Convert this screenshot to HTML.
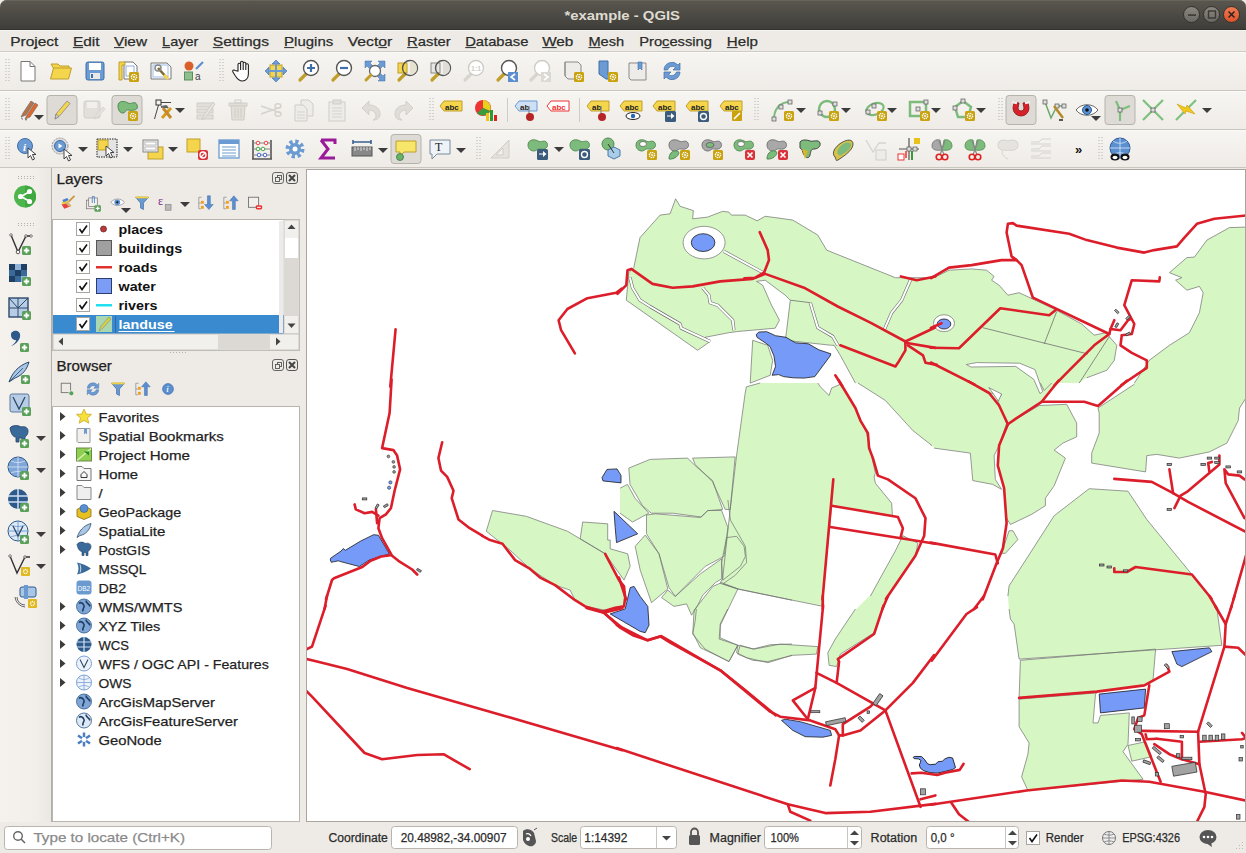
<!DOCTYPE html>
<html><head><meta charset="utf-8">
<style>
*{box-sizing:border-box;margin:0;padding:0}
html,body{width:1246px;height:853px;overflow:hidden;background:#eeebe7;font-family:"Liberation Sans",sans-serif;color:#3c3c3c}
.a{position:absolute}
#title{left:0;top:0;width:1246px;height:30px;background:linear-gradient(#5a574f,#4c4a44 50%,#3e3d38);border-radius:7px 7px 0 0;box-shadow:inset 0 1px #67645a,inset 0 -1px #33322e}
#title .t{left:0;width:1246px;top:6px;text-align:center;color:#dfdbd2;font-size:14.5px;font-weight:bold}
.wb{width:17px;height:17px;border-radius:50%;top:6px;background:linear-gradient(#8a8780,#6b6963);border:1px solid #34332f}
#menu{left:0;top:30px;width:1246px;height:22px;background:#eeebe6;border-top:1px solid #f6f4f0;border-bottom:1px solid #cfccc5}
#menu span{position:absolute;top:2px;font-size:14px;letter-spacing:0.6px;color:#2e2e2e}
.tb{left:0;width:1246px;background:linear-gradient(#f7f5f1,#efece8);border-top:1px solid #fbfaf8;border-bottom:1px solid #c9c6bf}
.tree{background:#fff;border:1px solid #b9b5ae}
.btxt{font-size:14px;letter-spacing:0.5px;color:#262626;line-height:19px;white-space:nowrap}
.ltxt{font-size:14px;letter-spacing:0.2px;font-weight:bold;color:#111;line-height:19px;white-space:nowrap}
.stxt{font-size:13.5px;color:#333;line-height:18px;white-space:nowrap}
.ptitle{font-size:14.5px;letter-spacing:0.4px;color:#1e1e1e}
</style></head><body>
<div id="title" class="a">
<div class="wb a" style="left:1183px"></div>
<div class="wb a" style="left:1203px"></div>
<div class="wb a" style="left:1223px;background:linear-gradient(#f07a50,#e0522a)"></div>
<svg class="a" style="left:1175px;top:0" width="71" height="30"><rect x="13" y="14.3" width="8" height="1.6" fill="#3a3935"/><rect x="33.5" y="11" width="7" height="7" fill="none" stroke="#3a3935" stroke-width="1.4"/><path d="M53.5 11.5l6 6M59.5 11.5l-6 6" stroke="#2a2320" stroke-width="1.5"/></svg>
</div>
<div id="menu" class="a"></div>
<div class="tb a" style="top:52px;height:39px"></div>
<div class="tb a" style="top:91px;height:39px"></div>
<div class="tb a" style="top:130px;height:38px"></div>
<svg class="a" style="left:0;top:0" width="1246" height="170"><rect x="5.5" y="59.0" width="1" height="1" fill="#b4b1ab"/><rect x="8.5" y="59.0" width="1" height="1" fill="#b4b1ab"/><rect x="5.5" y="62.0" width="1" height="1" fill="#b4b1ab"/><rect x="8.5" y="62.0" width="1" height="1" fill="#b4b1ab"/><rect x="5.5" y="65.0" width="1" height="1" fill="#b4b1ab"/><rect x="8.5" y="65.0" width="1" height="1" fill="#b4b1ab"/><rect x="5.5" y="68.0" width="1" height="1" fill="#b4b1ab"/><rect x="8.5" y="68.0" width="1" height="1" fill="#b4b1ab"/><rect x="5.5" y="71.0" width="1" height="1" fill="#b4b1ab"/><rect x="8.5" y="71.0" width="1" height="1" fill="#b4b1ab"/><rect x="5.5" y="74.0" width="1" height="1" fill="#b4b1ab"/><rect x="8.5" y="74.0" width="1" height="1" fill="#b4b1ab"/><rect x="5.5" y="77.0" width="1" height="1" fill="#b4b1ab"/><rect x="8.5" y="77.0" width="1" height="1" fill="#b4b1ab"/><rect x="5.5" y="80.0" width="1" height="1" fill="#b4b1ab"/><rect x="8.5" y="80.0" width="1" height="1" fill="#b4b1ab"/><g transform="translate(16,59)"><path d="M5 2.5h9l5 5v14.5h-14z" fill="#fff" stroke="#777"/><path d="M14 2.5v5h5" fill="none" stroke="#777"/></g><g transform="translate(49,59)"><path d="M2 5h7l2 2h9v3h-15z" fill="#f4d54c" stroke="#bf9e2a"/><path d="M1.5 20l3-11h18l-3 11z" fill="#f4d54c" stroke="#bf9e2a"/></g><g transform="translate(83,59)"><rect x="3" y="3" width="18" height="18" rx="2" fill="#6b9bd2" stroke="#3f6ea8"/><rect x="6" y="4" width="12" height="7" fill="#fff"/><rect x="7" y="14" width="10" height="6" fill="#e8e8e8"/><rect x="8" y="15" width="2" height="4" fill="#3f6ea8"/></g><g transform="translate(116,59)"><path d="M8 3h9l4 4v13h-13z" fill="#fff" stroke="#777"/><rect x="10" y="7" width="8" height="10" fill="none" stroke="#8fb0e0"/><path d="M3 3h6v3h-3v15h-3z" fill="#f4d54c" stroke="#bf9e2a"/><rect x="13" y="13" width="10" height="10" rx="1.5" fill="#c9a20e"/><circle cx="18" cy="18" r="2.6" fill="none" stroke="#fff" stroke-width="1.4" stroke-dasharray="1.3 0.7"/><circle cx="18" cy="18" r="0.9" fill="#fff"/></g><g transform="translate(149,59)"><path d="M2 4h16l4 4v12h-20z" fill="#fff" stroke="#777"/><rect x="4" y="6" width="15" height="12" fill="none" stroke="#9cbbe6"/><path d="M9 9l9 10" stroke="#7a6a3a" stroke-width="2.5"/><path d="M15 16l4 4" stroke="#f4d54c" stroke-width="3"/><circle cx="9" cy="9" r="3" fill="none" stroke="#888" stroke-width="1.5"/></g><g transform="translate(182,59)"><circle cx="7" cy="7" r="4.5" fill="#d9602b"/><path d="M14 10l7-7" stroke="#5b8fcf" stroke-width="2.2"/><rect x="2.5" y="13" width="8" height="8" fill="#8fbf8f" stroke="#5a8f5a"/><text x="13" y="21" font-size="10" font-family="Liberation Sans" fill="#444">a</text></g><rect x="219.5" y="59.0" width="1" height="1" fill="#b4b1ab"/><rect x="222.5" y="59.0" width="1" height="1" fill="#b4b1ab"/><rect x="219.5" y="62.0" width="1" height="1" fill="#b4b1ab"/><rect x="222.5" y="62.0" width="1" height="1" fill="#b4b1ab"/><rect x="219.5" y="65.0" width="1" height="1" fill="#b4b1ab"/><rect x="222.5" y="65.0" width="1" height="1" fill="#b4b1ab"/><rect x="219.5" y="68.0" width="1" height="1" fill="#b4b1ab"/><rect x="222.5" y="68.0" width="1" height="1" fill="#b4b1ab"/><rect x="219.5" y="71.0" width="1" height="1" fill="#b4b1ab"/><rect x="222.5" y="71.0" width="1" height="1" fill="#b4b1ab"/><rect x="219.5" y="74.0" width="1" height="1" fill="#b4b1ab"/><rect x="222.5" y="74.0" width="1" height="1" fill="#b4b1ab"/><rect x="219.5" y="77.0" width="1" height="1" fill="#b4b1ab"/><rect x="222.5" y="77.0" width="1" height="1" fill="#b4b1ab"/><rect x="219.5" y="80.0" width="1" height="1" fill="#b4b1ab"/><rect x="222.5" y="80.0" width="1" height="1" fill="#b4b1ab"/><g transform="translate(231,59)"><path d="M7 12V5.5a1.3 1.3 0 0 1 2.6 0V11V3.5a1.3 1.3 0 0 1 2.6 0V11V4.5a1.3 1.3 0 0 1 2.6 0V11V6a1.3 1.3 0 0 1 2.6 0v9c0 4-2.5 7-6 7s-5-2-7-5l-2.5-4a1.2 1.2 0 0 1 2-1.5z" fill="#fff" stroke="#222" stroke-width="1.1"/></g><g transform="translate(264,59)"><rect x="6" y="6" width="12" height="12" fill="#f4d54c" stroke="#bf9e2a"/><path d="M12 1l4 4h-8zM12 23l4-4h-8zM1 12l4-4v8zM23 12l-4-4v8z" fill="#6b9bd2" stroke="#3f6ea8" stroke-width="0.6"/><path d="M12 4v16M4 12h16" stroke="#6b9bd2" stroke-width="2"/></g><g transform="translate(297,59)"><path d="M3 21l6-6" stroke="#bf9e2a" stroke-width="3.2" stroke-linecap="round"/><circle cx="14" cy="9" r="7.5" fill="#fff" stroke="#555" stroke-width="1.4"/><path d="M14 5v8M10 9h8" stroke="#3f6ea8" stroke-width="2.2"/></g><g transform="translate(330,59)"><path d="M3 21l6-6" stroke="#bf9e2a" stroke-width="3.2" stroke-linecap="round"/><circle cx="14" cy="9" r="7.5" fill="#fff" stroke="#555" stroke-width="1.4"/><path d="M10 9h8" stroke="#3f6ea8" stroke-width="2.2"/></g><g transform="translate(363,59)"><path d="M2 2h7l-2 2 3 3-3 3-3-3-2 2zM22 2v7l-2-2-3 3-3-3 3-3-2-2zM22 22h-7l2-2-3-3 3-3 3 3 2-2z" fill="#6b9bd2" stroke="#3f6ea8" stroke-width="0.5"/><circle cx="12" cy="12" r="5.5" fill="#fff" stroke="#666" stroke-width="1.3"/><path d="M3 21l5-5" stroke="#bf9e2a" stroke-width="3" stroke-linecap="round"/></g><g transform="translate(396,59)"><rect x="2" y="4" width="9" height="10" fill="#f4d54c" stroke="#bf9e2a"/></g><g transform="translate(396,59)"><path d="M3 21l6-6" stroke="#bf9e2a" stroke-width="3.2" stroke-linecap="round"/><circle cx="14" cy="9" r="7.5" fill="none" stroke="#555" stroke-width="1.4"/><path d="M14 2a7 7 0 0 1 0 14z" fill="#e6e2d0"/></g><g transform="translate(429,59)"><rect x="2" y="4" width="9" height="10" fill="#e8e6e2" stroke="#888"/></g><g transform="translate(429,59)"><path d="M3 21l6-6" stroke="#bf9e2a" stroke-width="3.2" stroke-linecap="round"/><circle cx="14" cy="9" r="7.5" fill="none" stroke="#555" stroke-width="1.4"/><path d="M14 2a7 7 0 0 1 0 14z" fill="#e0ddd8"/></g><g transform="translate(462,59)"><path d="M3 21l6-6" stroke="#d8d5cf" stroke-width="3.2" stroke-linecap="round"/><circle cx="14" cy="9" r="7.5" fill="#fff" stroke="#cfccc6" stroke-width="1.4"/><text x="9" y="12" font-size="7" font-family="Liberation Sans" font-weight="bold" fill="#cfccc6">1:1</text></g><g transform="translate(495,59)"><path d="M3 21l6-6" stroke="#bf9e2a" stroke-width="3.2" stroke-linecap="round"/><circle cx="14" cy="9" r="7.5" fill="#fff" stroke="#555" stroke-width="1.4"/><rect x="13" y="13" width="10" height="10" fill="#5b8fcf"/><path d="M20 15l-4 3 4 3" stroke="#fff" stroke-width="1.6" fill="none"/></g><g transform="translate(528,59)"><path d="M3 21l6-6" stroke="#d8d5cf" stroke-width="3.2" stroke-linecap="round"/><circle cx="14" cy="9" r="7.5" fill="#fff" stroke="#cfccc6" stroke-width="1.4"/><rect x="13" y="13" width="10" height="10" fill="#dcd9d3"/><path d="M16 15l4 3-4 3" stroke="#fff" stroke-width="1.6" fill="none"/></g><g transform="translate(561,59)"><path d="M4 3h13l3 3v14h-13l-3-3z" fill="#eeece8" stroke="#8a8a8a"/><path d="M4 3v14" stroke="#8a8a8a"/><rect x="13" y="13" width="10" height="10" rx="1.5" fill="#c9a20e"/><circle cx="18" cy="18" r="2.6" fill="none" stroke="#fff" stroke-width="1.4" stroke-dasharray="1.3 0.7"/><circle cx="18" cy="18" r="0.9" fill="#fff"/></g><g transform="translate(595,59)"><path d="M4 2h9v14l4 4h-6l-7-5z" fill="#6b9bd2" stroke="#3f6ea8"/><rect x="13" y="13" width="10" height="10" rx="1.5" fill="#c9a20e"/><circle cx="18" cy="18" r="2.6" fill="none" stroke="#fff" stroke-width="1.4" stroke-dasharray="1.3 0.7"/><circle cx="18" cy="18" r="0.9" fill="#fff"/></g><g transform="translate(626,59)"><path d="M3 4h17v17h-15l-2-2z" fill="#eeece8" stroke="#8a8a8a"/><path d="M12 3h4v8l-2-2-2 2z" fill="#6b9bd2" stroke="#3f6ea8" stroke-width="0.6"/></g><g transform="translate(660,59)"><path d="M4 11a8 8 0 0 1 14-5l2-2v7h-7l2.5-2.5a5 5 0 0 0-8 2.5z" fill="#6b9bd2" stroke="#3f6ea8" stroke-width="0.7"/><path d="M20 13a8 8 0 0 1-14 5l-2 2v-7h7l-2.5 2.5a5 5 0 0 0 8-2.5z" fill="#6b9bd2" stroke="#3f6ea8" stroke-width="0.7"/></g><rect x="5.5" y="98.0" width="1" height="1" fill="#b4b1ab"/><rect x="8.5" y="98.0" width="1" height="1" fill="#b4b1ab"/><rect x="5.5" y="101.0" width="1" height="1" fill="#b4b1ab"/><rect x="8.5" y="101.0" width="1" height="1" fill="#b4b1ab"/><rect x="5.5" y="104.0" width="1" height="1" fill="#b4b1ab"/><rect x="8.5" y="104.0" width="1" height="1" fill="#b4b1ab"/><rect x="5.5" y="107.0" width="1" height="1" fill="#b4b1ab"/><rect x="8.5" y="107.0" width="1" height="1" fill="#b4b1ab"/><rect x="5.5" y="110.0" width="1" height="1" fill="#b4b1ab"/><rect x="8.5" y="110.0" width="1" height="1" fill="#b4b1ab"/><rect x="5.5" y="113.0" width="1" height="1" fill="#b4b1ab"/><rect x="8.5" y="113.0" width="1" height="1" fill="#b4b1ab"/><rect x="5.5" y="116.0" width="1" height="1" fill="#b4b1ab"/><rect x="8.5" y="116.0" width="1" height="1" fill="#b4b1ab"/><rect x="5.5" y="119.0" width="1" height="1" fill="#b4b1ab"/><rect x="8.5" y="119.0" width="1" height="1" fill="#b4b1ab"/><rect x="47.0" y="95.5" width="30" height="29" rx="3" fill="#dedbd6" stroke="#b6b3ad"/><rect x="112.0" y="95.5" width="30" height="29" rx="3" fill="#dedbd6" stroke="#b6b3ad"/><rect x="1006.0" y="95.5" width="30" height="29" rx="3" fill="#dedbd6" stroke="#b6b3ad"/><rect x="1105.0" y="95.5" width="30" height="29" rx="3" fill="#dedbd6" stroke="#b6b3ad"/><g transform="translate(18,98)"><path d="M3 19l2-4 8-12 3 2-8 12z" fill="#b5734a" stroke="#666" stroke-width="0.6"/><path d="M7 21l2-4 8-12 3 2-8 12z" fill="#e2662a" stroke="#666" stroke-width="0.6"/><path d="M3 19l1 3 1-1zM7 21l1 2 1-2" fill="#666"/></g><path d="M34 115h10l-5 5z" fill="#3c3c3c"/><g transform="translate(50,98)"><path d="M5 21l1-5 11-13 3 2.5-11 13z" fill="#f4d54c" stroke="#888" stroke-width="0.8"/><path d="M5 21l1-5 3 2.5z" fill="#ccc" stroke="#777" stroke-width="0.6"/></g><g transform="translate(82,98)"><rect x="2" y="3" width="16" height="17" rx="2" fill="#e2dfda" stroke="#d0cdc7"/><rect x="5" y="4" width="10" height="6" fill="#f2f0ec"/><path d="M12 21l2-4 7-8 2 2-7 8z" fill="#e6e3de" stroke="#d0cdc7" stroke-width="0.7"/></g><g transform="translate(115,98)"><path d="M3 8c0-6 7-5 10-3s7-3 9 2-4 6-8 5-3 3-6 3-5-3-5-7z" fill="#7dbb7d" stroke="#4f8a4f"/><rect x="13" y="13" width="10" height="10" rx="1.5" fill="#c9a20e"/><circle cx="18" cy="18" r="2.6" fill="none" stroke="#fff" stroke-width="1.4" stroke-dasharray="1.3 0.7"/><circle cx="18" cy="18" r="0.9" fill="#fff"/></g><g transform="translate(151,98)"><rect x="5" y="2" width="5" height="5" fill="none" stroke="#333"/><path d="M7.5 7l-4 14M10 4.5h10" stroke="#333" stroke-width="0.9"/><path d="M11 20l9-10" stroke="#d49b1f" stroke-width="3"/><path d="M12 10l8 10" stroke="#c48a2a" stroke-width="3"/><path d="M10 9l5-1 2 2" stroke="#666" stroke-width="2"/></g><path d="M175 108h10l-5 5z" fill="#3c3c3c"/><g transform="translate(194,98)"><rect x="3" y="5" width="16" height="4" fill="#e2dfda" stroke="#d0cdc7"/><rect x="3" y="11" width="16" height="4" fill="#e2dfda" stroke="#d0cdc7"/><rect x="3" y="17" width="16" height="4" fill="#e2dfda" stroke="#d0cdc7"/><path d="M8 22l2-5 9-13 2 2-9 13z" fill="#e8e5e0" stroke="#d0cdc7"/></g><g transform="translate(226,98)"><rect x="3" y="5" width="18" height="3" fill="#e2dfda" stroke="#d0cdc7"/><path d="M5 8h14l-1 14h-12z" fill="#e2dfda" stroke="#d0cdc7"/><path d="M9 10v10M12 10v10M15 10v10" stroke="#d0cdc7"/><rect x="9" y="2" width="6" height="3" fill="none" stroke="#d0cdc7"/></g><g transform="translate(259,98)"><path d="M2 8l20 7M2 16l20-7" stroke="#d6d3cd" stroke-width="1.6"/><ellipse cx="19" cy="8" rx="3" ry="2.3" fill="none" stroke="#d6d3cd" stroke-width="1.5"/><ellipse cx="19" cy="16" rx="3" ry="2.3" fill="none" stroke="#d6d3cd" stroke-width="1.5"/></g><g transform="translate(292,98)"><path d="M9 2h8l4 4v12h-12z" fill="#eeece8" stroke="#d0cdc7"/><path d="M3 7h8l4 4v12h-12z" fill="#eeece8" stroke="#d0cdc7"/><path d="M5 14h8M5 17h8M5 20h8" stroke="#d6d3cd"/></g><g transform="translate(325,98)"><rect x="4" y="4" width="16" height="19" fill="#eeece8" stroke="#d0cdc7"/><rect x="8" y="2" width="8" height="4" fill="#e2dfda" stroke="#d0cdc7"/><path d="M7 10h10M7 13h10M7 16h10M7 19h10" stroke="#d6d3cd"/></g><g transform="translate(359,98)"><g><path d="M3 10l7-7v4c7 0 11 4 11 9s-4 6-7 6c3-2 4-4 2-7s-6-3-6-3v5z" fill="#e0ddd8" stroke="#d2cfc9"/></g></g><g transform="translate(392,98)"><g transform="translate(24,0) scale(-1,1)"><path d="M3 10l7-7v4c7 0 11 4 11 9s-4 6-7 6c3-2 4-4 2-7s-6-3-6-3v5z" fill="#e0ddd8" stroke="#d2cfc9"/></g></g><rect x="429.5" y="98.0" width="1" height="1" fill="#b4b1ab"/><rect x="432.5" y="98.0" width="1" height="1" fill="#b4b1ab"/><rect x="429.5" y="101.0" width="1" height="1" fill="#b4b1ab"/><rect x="432.5" y="101.0" width="1" height="1" fill="#b4b1ab"/><rect x="429.5" y="104.0" width="1" height="1" fill="#b4b1ab"/><rect x="432.5" y="104.0" width="1" height="1" fill="#b4b1ab"/><rect x="429.5" y="107.0" width="1" height="1" fill="#b4b1ab"/><rect x="432.5" y="107.0" width="1" height="1" fill="#b4b1ab"/><rect x="429.5" y="110.0" width="1" height="1" fill="#b4b1ab"/><rect x="432.5" y="110.0" width="1" height="1" fill="#b4b1ab"/><rect x="429.5" y="113.0" width="1" height="1" fill="#b4b1ab"/><rect x="432.5" y="113.0" width="1" height="1" fill="#b4b1ab"/><rect x="429.5" y="116.0" width="1" height="1" fill="#b4b1ab"/><rect x="432.5" y="116.0" width="1" height="1" fill="#b4b1ab"/><rect x="429.5" y="119.0" width="1" height="1" fill="#b4b1ab"/><rect x="432.5" y="119.0" width="1" height="1" fill="#b4b1ab"/><g transform="translate(439,98)"><path d="M1 8l4-5h18v10h-18z" fill="#f4d54c" stroke="#bf9e2a"/><text x="6" y="11.5" font-size="8" font-weight="bold" font-family="Liberation Sans" fill="#222">abc</text></g><g transform="translate(473,98)"><circle cx="10" cy="10" r="8" fill="#e33"/><path d="M10 10V2a8 8 0 0 1 7 11z" fill="#e6d21d"/><path d="M10 10l7 3a8 8 0 0 1-13 2z" fill="#3b9b3b"/><rect x="13" y="15" width="3" height="8" fill="#f0c419"/><rect x="17" y="12" width="3" height="11" fill="#2f9a2f"/><rect x="21" y="17" width="3" height="6" fill="#d22"/></g><rect x="507" y="98" width="1" height="24" fill="#cfccc6"/><g transform="translate(514,98)"><path d="M1 8l4-5h18v10h-18z" fill="#cfe0f5" stroke="#6b9bd2"/><text x="6" y="11.5" font-size="8" font-weight="bold" font-family="Liberation Sans" fill="#222">ab</text></g><g transform="translate(514,98)"><path d="M15 8v8" stroke="#888" stroke-width="1.2"/><circle cx="16" cy="19" r="4" fill="#b52525"/></g><g transform="translate(546,98)"><path d="M1 8l4-5h18v10h-18z" fill="#fff" stroke="#e33"/><text x="6" y="11.5" font-size="8" font-weight="bold" font-family="Liberation Sans" fill="#e33">abc</text></g><rect x="579" y="98" width="1" height="24" fill="#cfccc6"/><g transform="translate(586,98)"><path d="M1 8l4-5h18v10h-18z" fill="#f4d54c" stroke="#bf9e2a"/><text x="6" y="11.5" font-size="8" font-weight="bold" font-family="Liberation Sans" fill="#222">ab</text></g><g transform="translate(586,98)"><path d="M15 8v8" stroke="#888" stroke-width="1.2"/><circle cx="16" cy="19" r="4" fill="#b52525"/></g><g transform="translate(619,98)"><path d="M1 8l4-5h18v10h-18z" fill="#f4d54c" stroke="#bf9e2a"/><text x="6" y="11.5" font-size="8" font-weight="bold" font-family="Liberation Sans" fill="#222">abc</text></g><g transform="translate(619,98)"><ellipse cx="14" cy="18" rx="7" ry="3.5" fill="#fff" stroke="#222"/><circle cx="14" cy="18" r="2.2" fill="#2a66b0"/></g><g transform="translate(652,98)"><path d="M1 8l4-5h18v10h-18z" fill="#f4d54c" stroke="#bf9e2a"/><text x="6" y="11.5" font-size="8" font-weight="bold" font-family="Liberation Sans" fill="#222">abc</text></g><g transform="translate(652,98)"><rect x="13" y="13" width="11" height="11" rx="1.5" fill="#3b5b7c"/><path d="M15 17.5h4v-2.5l3.5 3-3.5 3v-2.5h-4z" fill="#fff"/></g><g transform="translate(685,98)"><path d="M1 8l4-5h18v10h-18z" fill="#f4d54c" stroke="#bf9e2a"/><text x="6" y="11.5" font-size="8" font-weight="bold" font-family="Liberation Sans" fill="#222">abc</text></g><g transform="translate(685,98)"><rect x="13" y="13" width="11" height="11" rx="1.5" fill="#3b5b7c"/><circle cx="18.5" cy="18.5" r="3" fill="none" stroke="#fff" stroke-width="1.4"/></g><g transform="translate(719,98)"><path d="M1 8l4-5h18v10h-18z" fill="#f4d54c" stroke="#bf9e2a"/><text x="6" y="11.5" font-size="8" font-weight="bold" font-family="Liberation Sans" fill="#222">abc</text></g><g transform="translate(719,98)"><rect x="13" y="13" width="10" height="10" rx="1" fill="#c9a20e"/><path d="M15 21l6-6" stroke="#fff" stroke-width="1.6"/></g><rect x="754.5" y="98.0" width="1" height="1" fill="#b4b1ab"/><rect x="757.5" y="98.0" width="1" height="1" fill="#b4b1ab"/><rect x="754.5" y="101.0" width="1" height="1" fill="#b4b1ab"/><rect x="757.5" y="101.0" width="1" height="1" fill="#b4b1ab"/><rect x="754.5" y="104.0" width="1" height="1" fill="#b4b1ab"/><rect x="757.5" y="104.0" width="1" height="1" fill="#b4b1ab"/><rect x="754.5" y="107.0" width="1" height="1" fill="#b4b1ab"/><rect x="757.5" y="107.0" width="1" height="1" fill="#b4b1ab"/><rect x="754.5" y="110.0" width="1" height="1" fill="#b4b1ab"/><rect x="757.5" y="110.0" width="1" height="1" fill="#b4b1ab"/><rect x="754.5" y="113.0" width="1" height="1" fill="#b4b1ab"/><rect x="757.5" y="113.0" width="1" height="1" fill="#b4b1ab"/><rect x="754.5" y="116.0" width="1" height="1" fill="#b4b1ab"/><rect x="757.5" y="116.0" width="1" height="1" fill="#b4b1ab"/><rect x="754.5" y="119.0" width="1" height="1" fill="#b4b1ab"/><rect x="757.5" y="119.0" width="1" height="1" fill="#b4b1ab"/><g transform="translate(771,98)"><path d="M3 21c0-10 6-17 16-17" fill="none" stroke="#7dbb7d" stroke-width="2"/><rect x="1" y="19" width="4" height="4" fill="#ddd" stroke="#555" stroke-width="0.7"/><rect x="8" y="7" width="4" height="4" fill="#ddd" stroke="#555" stroke-width="0.7"/><rect x="17" y="2" width="4" height="4" fill="#ddd" stroke="#555" stroke-width="0.7"/><rect x="13" y="13" width="10" height="10" rx="1.5" fill="#c9a20e"/><circle cx="18" cy="18" r="2.6" fill="none" stroke="#fff" stroke-width="1.4" stroke-dasharray="1.3 0.7"/><circle cx="18" cy="18" r="0.9" fill="#fff"/></g><path d="M796 108h10l-5 5z" fill="#3c3c3c"/><g transform="translate(816,98)"><circle cx="11" cy="11" r="8" fill="none" stroke="#7dbb7d" stroke-width="2.5"/><rect x="17" y="4" width="4" height="4" fill="#ddd" stroke="#555" stroke-width="0.7"/><rect x="2" y="13" width="4" height="4" fill="#ddd" stroke="#555" stroke-width="0.7"/><rect x="13" y="13" width="10" height="10" rx="1.5" fill="#c9a20e"/><circle cx="18" cy="18" r="2.6" fill="none" stroke="#fff" stroke-width="1.4" stroke-dasharray="1.3 0.7"/><circle cx="18" cy="18" r="0.9" fill="#fff"/></g><path d="M841 108h10l-5 5z" fill="#3c3c3c"/><g transform="translate(864,98)"><ellipse cx="11" cy="11" rx="9" ry="5.5" fill="none" stroke="#7dbb7d" stroke-width="2.2" transform="rotate(-20 11 11)"/><rect x="2" y="12" width="4" height="4" fill="#ddd" stroke="#555" stroke-width="0.7"/><rect x="8" y="6" width="4" height="4" fill="#ddd" stroke="#555" stroke-width="0.7"/><rect x="13" y="13" width="10" height="10" rx="1.5" fill="#c9a20e"/><circle cx="18" cy="18" r="2.6" fill="none" stroke="#fff" stroke-width="1.4" stroke-dasharray="1.3 0.7"/><circle cx="18" cy="18" r="0.9" fill="#fff"/></g><path d="M887 108h10l-5 5z" fill="#3c3c3c"/><g transform="translate(907,98)"><rect x="3" y="4" width="16" height="14" fill="none" stroke="#7dbb7d" stroke-width="2.5"/><rect x="9" y="9" width="4" height="4" fill="#ddd" stroke="#555" stroke-width="0.7"/><rect x="17" y="2" width="4" height="4" fill="#ddd" stroke="#555" stroke-width="0.7"/><rect x="13" y="13" width="10" height="10" rx="1.5" fill="#c9a20e"/><circle cx="18" cy="18" r="2.6" fill="none" stroke="#fff" stroke-width="1.4" stroke-dasharray="1.3 0.7"/><circle cx="18" cy="18" r="0.9" fill="#fff"/></g><path d="M931 108h10l-5 5z" fill="#3c3c3c"/><g transform="translate(952,98)"><path d="M11 3l8 6-3 10h-10l-3-10z" fill="none" stroke="#7dbb7d" stroke-width="2.5"/><rect x="9" y="1" width="4" height="4" fill="#ddd" stroke="#555" stroke-width="0.7"/><rect x="1" y="8" width="4" height="4" fill="#ddd" stroke="#555" stroke-width="0.7"/><rect x="13" y="13" width="10" height="10" rx="1.5" fill="#c9a20e"/><circle cx="18" cy="18" r="2.6" fill="none" stroke="#fff" stroke-width="1.4" stroke-dasharray="1.3 0.7"/><circle cx="18" cy="18" r="0.9" fill="#fff"/></g><path d="M976 108h10l-5 5z" fill="#3c3c3c"/><rect x="998.5" y="98.0" width="1" height="1" fill="#b4b1ab"/><rect x="1001.5" y="98.0" width="1" height="1" fill="#b4b1ab"/><rect x="998.5" y="101.0" width="1" height="1" fill="#b4b1ab"/><rect x="1001.5" y="101.0" width="1" height="1" fill="#b4b1ab"/><rect x="998.5" y="104.0" width="1" height="1" fill="#b4b1ab"/><rect x="1001.5" y="104.0" width="1" height="1" fill="#b4b1ab"/><rect x="998.5" y="107.0" width="1" height="1" fill="#b4b1ab"/><rect x="1001.5" y="107.0" width="1" height="1" fill="#b4b1ab"/><rect x="998.5" y="110.0" width="1" height="1" fill="#b4b1ab"/><rect x="1001.5" y="110.0" width="1" height="1" fill="#b4b1ab"/><rect x="998.5" y="113.0" width="1" height="1" fill="#b4b1ab"/><rect x="1001.5" y="113.0" width="1" height="1" fill="#b4b1ab"/><rect x="998.5" y="116.0" width="1" height="1" fill="#b4b1ab"/><rect x="1001.5" y="116.0" width="1" height="1" fill="#b4b1ab"/><rect x="998.5" y="119.0" width="1" height="1" fill="#b4b1ab"/><rect x="1001.5" y="119.0" width="1" height="1" fill="#b4b1ab"/><g transform="translate(1009,98)"><path d="M4 10a8 8 0 0 0 16 0l-1-6-5 1 1 5a3 3 0 0 1-6 0l1-5-5-1z" fill="#d8202a" stroke="#8a1515" stroke-width="0.8"/><path d="M3 4l5 1M16 5l5-1" stroke="#eee" stroke-width="2.5"/></g><g transform="translate(1042,98)"><path d="M3 4l6 16 6-12h7" fill="none" stroke="#6aa86a" stroke-width="1.5"/><rect x="1" y="2" width="4" height="4" fill="#ddd" stroke="#555" stroke-width="0.7"/><rect x="13" y="6" width="4" height="4" fill="#ddd" stroke="#555" stroke-width="0.7"/><rect x="20" y="6" width="4" height="4" fill="#ddd" stroke="#555" stroke-width="0.7"/><path d="M12 8l9 12" stroke="#b68a2a" stroke-width="2.5"/><path d="M17 22l4 0" stroke="#222" stroke-width="1.5"/></g><g transform="translate(1075,98)"><path d="M1 12c5-7 17-7 22 0-5 7-17 7-22 0z" fill="#fff" stroke="#666"/><circle cx="12" cy="12" r="4.5" fill="#5a8fd0" stroke="#2a5a9a"/><circle cx="12" cy="12" r="1.8" fill="#111"/></g><path d="M1091 116h10l-5 5z" fill="#3c3c3c"/><g transform="translate(1108,98)"><path d="M12 12l-4-9M12 12l10-4M12 12v11" stroke="#7cc07c" stroke-width="2.2"/><rect x="10" y="10" width="4" height="4" fill="#ddd" stroke="#555" stroke-width="0.7"/></g><g transform="translate(1141,98)"><path d="M2 2l20 20M22 2l-20 20" stroke="#7cc07c" stroke-width="2.2"/><rect x="10" y="10" width="4" height="4" fill="#ddd" stroke="#555" stroke-width="0.7"/></g><g transform="translate(1174,98)"><path d="M2 22l20-20" stroke="#7cc07c" stroke-width="2.2"/><path d="M3 6l9 4 1-3 8 9-9-3-1 3z" fill="#f2c81a" stroke="#c79a10" stroke-width="0.6"/></g><path d="M1202 108h10l-5 5z" fill="#3c3c3c"/><rect x="5.5" y="137.0" width="1" height="1" fill="#b4b1ab"/><rect x="8.5" y="137.0" width="1" height="1" fill="#b4b1ab"/><rect x="5.5" y="140.0" width="1" height="1" fill="#b4b1ab"/><rect x="8.5" y="140.0" width="1" height="1" fill="#b4b1ab"/><rect x="5.5" y="143.0" width="1" height="1" fill="#b4b1ab"/><rect x="8.5" y="143.0" width="1" height="1" fill="#b4b1ab"/><rect x="5.5" y="146.0" width="1" height="1" fill="#b4b1ab"/><rect x="8.5" y="146.0" width="1" height="1" fill="#b4b1ab"/><rect x="5.5" y="149.0" width="1" height="1" fill="#b4b1ab"/><rect x="8.5" y="149.0" width="1" height="1" fill="#b4b1ab"/><rect x="5.5" y="152.0" width="1" height="1" fill="#b4b1ab"/><rect x="8.5" y="152.0" width="1" height="1" fill="#b4b1ab"/><rect x="5.5" y="155.0" width="1" height="1" fill="#b4b1ab"/><rect x="8.5" y="155.0" width="1" height="1" fill="#b4b1ab"/><rect x="5.5" y="158.0" width="1" height="1" fill="#b4b1ab"/><rect x="8.5" y="158.0" width="1" height="1" fill="#b4b1ab"/><rect x="391.0" y="134.5" width="30" height="29" rx="3" fill="#dedbd6" stroke="#b6b3ad"/><g transform="translate(16,137)"><circle cx="9" cy="9" r="7.5" fill="#6b9bd2" stroke="#3f6ea8"/><text x="7" y="14" font-size="11" font-weight="bold" font-style="italic" font-family="Liberation Serif" fill="#fff">i</text><path d="M12 11l0 10 2.5-2.5 2 4.5 2-1-2-4.5h3.5z" fill="#fff" stroke="#333" stroke-width="0.9"/></g><g transform="translate(51,137)"><circle cx="9" cy="9" r="8" fill="#ddd" stroke="#999" stroke-dasharray="2 1"/><circle cx="9" cy="9" r="5.5" fill="#6b9bd2" stroke="#3f6ea8"/><path d="M7.5 6.5l4 2.5-4 2.5z" fill="#fff"/><path d="M13 12l0 10 2.5-2.5 2 4.5 2-1-2-4.5h3.5z" fill="#fff" stroke="#333" stroke-width="0.9"/></g><path d="M78 147h10l-5 5z" fill="#3c3c3c"/><g transform="translate(95,137)"><rect x="2" y="2" width="20" height="18" fill="#e4e4e4" stroke="#222" stroke-dasharray="1.5 1"/><rect x="3" y="3" width="10" height="10" fill="#f4d54c" stroke="#bf9e2a"/><path d="M11 9l0 10 2.5-2.5 2 4.5 2-1-2-4.5h3.5z" fill="#fff" stroke="#333" stroke-width="0.9"/></g><path d="M123 147h10l-5 5z" fill="#3c3c3c"/><g transform="translate(141,137)"><rect x="7" y="10" width="15" height="12" fill="#f4d54c" stroke="#bf9e2a"/><rect x="2" y="3" width="15" height="12" fill="#eee" stroke="#888"/><rect x="4" y="5" width="11" height="3" fill="#fff" stroke="#999" stroke-width="0.6"/><rect x="4" y="10" width="11" height="3" fill="#fff" stroke="#999" stroke-width="0.6"/></g><path d="M168 147h10l-5 5z" fill="#3c3c3c"/><g transform="translate(185,137)"><rect x="2" y="2" width="13" height="13" fill="#f4d54c" stroke="#bf9e2a"/><rect x="13" y="13" width="10" height="10" rx="2" fill="#d8323a"/><circle cx="18" cy="18" r="3" fill="none" stroke="#fff" stroke-width="1.3"/><path d="M16 20l4-4" stroke="#fff" stroke-width="1.3"/></g><g transform="translate(217,137)"><rect x="2" y="3" width="20" height="18" fill="#fff" stroke="#6b9bd2" stroke-width="1.3"/><rect x="2" y="3" width="20" height="4" fill="#6b9bd2"/><path d="M5 10h14M5 13h14M5 16h14M5 19h14" stroke="#6b9bd2" stroke-width="1"/></g><g transform="translate(250,137)"><path d="M3 3v19M21 3v19M2 22h20" stroke="#555" stroke-width="1.6"/><path d="M3 6h18M3 12h18M3 18h18" stroke="#888"/><circle cx="8" cy="6" r="1.8" fill="#fff" stroke="#e44"/><circle cx="16" cy="6" r="1.8" fill="#fff" stroke="#e44"/><circle cx="8" cy="12" r="1.8" fill="#fff" stroke="#4a4"/><circle cx="13" cy="12" r="1.8" fill="#fff" stroke="#4a4"/><circle cx="9" cy="18" r="1.8" fill="#fff" stroke="#46c"/><circle cx="15" cy="18" r="1.8" fill="#fff" stroke="#46c"/></g><g transform="translate(283,137)"><circle cx="12" cy="12" r="7" fill="none" stroke="#6b9bd2" stroke-width="5" stroke-dasharray="3 2.5"/><circle cx="12" cy="12" r="6" fill="#6b9bd2"/><circle cx="12" cy="12" r="2.5" fill="#fff"/></g><g transform="translate(316,137)"><path d="M5 3h14v4M19 21h-14l7-9-7-9" fill="none" stroke="#9a1a9a" stroke-width="3"/></g><g transform="translate(350,137)"><path d="M3 5h18M3 3v4M21 3v4" stroke="#3a6090" stroke-width="1.6"/><rect x="2" y="10" width="20" height="9" fill="#888" stroke="#555"/><path d="M5 10v4M8 10v3M11 10v4M14 10v3M17 10v4M20 10v3" stroke="#ddd"/></g><path d="M378 148h10l-5 5z" fill="#3c3c3c"/><g transform="translate(394,137)"><path d="M2 4h20v11h-12l-4 4v-4h-4z" fill="#f7e66a" stroke="#bf9e2a"/><circle cx="6" cy="20" r="3.5" fill="#6bb06b" stroke="#3c7a3c" stroke-width="0.8"/></g><g transform="translate(428,137)"><path d="M2 3h20v14h-13l-5 5v-5h-2z" fill="#eef3f8" stroke="#7a8a9a"/><text x="7" y="14" font-size="12" font-family="Liberation Serif" fill="#222">T</text></g><path d="M456 148h10l-5 5z" fill="#3c3c3c"/><rect x="476.5" y="137.0" width="1" height="1" fill="#b4b1ab"/><rect x="479.5" y="137.0" width="1" height="1" fill="#b4b1ab"/><rect x="476.5" y="140.0" width="1" height="1" fill="#b4b1ab"/><rect x="479.5" y="140.0" width="1" height="1" fill="#b4b1ab"/><rect x="476.5" y="143.0" width="1" height="1" fill="#b4b1ab"/><rect x="479.5" y="143.0" width="1" height="1" fill="#b4b1ab"/><rect x="476.5" y="146.0" width="1" height="1" fill="#b4b1ab"/><rect x="479.5" y="146.0" width="1" height="1" fill="#b4b1ab"/><rect x="476.5" y="149.0" width="1" height="1" fill="#b4b1ab"/><rect x="479.5" y="149.0" width="1" height="1" fill="#b4b1ab"/><rect x="476.5" y="152.0" width="1" height="1" fill="#b4b1ab"/><rect x="479.5" y="152.0" width="1" height="1" fill="#b4b1ab"/><rect x="476.5" y="155.0" width="1" height="1" fill="#b4b1ab"/><rect x="479.5" y="155.0" width="1" height="1" fill="#b4b1ab"/><rect x="476.5" y="158.0" width="1" height="1" fill="#b4b1ab"/><rect x="479.5" y="158.0" width="1" height="1" fill="#b4b1ab"/><g transform="translate(488,137)"><path d="M3 21l18-18v18z" fill="#e6e3de" stroke="#d0cdc7"/><path d="M8 18l7-7v7z" fill="#f3f1ed" stroke="#d0cdc7"/></g><g transform="translate(526,137)"><path transform="translate(0,0)" d="M2 8c0-6 7-6 10-4s7-2 9 2-2 7-6 6-4 2-7 2-6-2-6-6z" fill="#7dbb7d" stroke="#4f8a4f" stroke-width="0.9"/><rect x="11" y="12" width="11" height="11" rx="1.5" fill="#3b5b7c"/><path d="M13 16.5h4v-2.5l3.5 3-3.5 3v-2.5h-4z" fill="#fff"/></g><path d="M554 147h10l-5 5z" fill="#3c3c3c"/><g transform="translate(568,137)"><path transform="translate(0,0)" d="M2 8c0-6 7-6 10-4s7-2 9 2-2 7-6 6-4 2-7 2-6-2-6-6z" fill="#7dbb7d" stroke="#4f8a4f" stroke-width="0.9"/><rect x="11" y="12" width="11" height="11" rx="1.5" fill="#3b5b7c"/><circle cx="16.5" cy="17.5" r="3" fill="none" stroke="#fff" stroke-width="1.4"/></g><g transform="translate(600,137)"><circle cx="8" cy="7" r="6" fill="#7dbb7d" stroke="#4f8a4f"/><path d="M14 10l6 3v6l-6 3-6-3v-6z" fill="#a9cce8" stroke="#4a7aa8"/><path d="M8 7l6 9" stroke="#333"/></g><g transform="translate(634,137)"><path transform="translate(0,0)" d="M2 8c0-6 7-6 10-4s7-2 9 2-2 7-6 6-4 2-7 2-6-2-6-6z" fill="#7dbb7d" stroke="#4f8a4f" stroke-width="0.9"/><ellipse cx="9" cy="7" rx="3.5" ry="2.5" fill="#fff" stroke="#555" stroke-width="0.7"/><rect x="13" y="13" width="10" height="10" rx="1.5" fill="#c9a20e"/><circle cx="18" cy="18" r="2.6" fill="none" stroke="#fff" stroke-width="1.4" stroke-dasharray="1.3 0.7"/><circle cx="18" cy="18" r="0.9" fill="#fff"/></g><g transform="translate(667,137)"><path transform="translate(0,0)" d="M2 8c0-6 7-6 10-4s7-2 9 2-2 7-6 6-4 2-7 2-6-2-6-6z" fill="#a8a8a8" stroke="#6e6e6e" stroke-width="0.9"/><path d="M2 22c0-5 3-9 8-8s-1 9-8 8z" fill="#7dbb7d" stroke="#4f8a4f"/><rect x="13" y="13" width="10" height="10" rx="1.5" fill="#c9a20e"/><circle cx="18" cy="18" r="2.6" fill="none" stroke="#fff" stroke-width="1.4" stroke-dasharray="1.3 0.7"/><circle cx="18" cy="18" r="0.9" fill="#fff"/></g><g transform="translate(700,137)"><path transform="translate(0,0)" d="M2 8c0-6 7-6 10-4s7-2 9 2-2 7-6 6-4 2-7 2-6-2-6-6z" fill="#a8a8a8" stroke="#6e6e6e" stroke-width="0.9"/><ellipse cx="10" cy="8" rx="4" ry="2.5" fill="#7dbb7d" stroke="#555" stroke-width="0.7"/><rect x="13" y="13" width="10" height="10" rx="1.5" fill="#c9a20e"/><circle cx="18" cy="18" r="2.6" fill="none" stroke="#fff" stroke-width="1.4" stroke-dasharray="1.3 0.7"/><circle cx="18" cy="18" r="0.9" fill="#fff"/></g><g transform="translate(732,137)"><path transform="translate(0,0)" d="M2 8c0-6 7-6 10-4s7-2 9 2-2 7-6 6-4 2-7 2-6-2-6-6z" fill="#7dbb7d" stroke="#4f8a4f" stroke-width="0.9"/><ellipse cx="9" cy="7" rx="3.5" ry="2.5" fill="#fff" stroke="#555" stroke-width="0.7"/><rect x="13" y="13" width="10" height="10" rx="2" fill="#d8323a"/><path d="M15.5 15.5l5 5M20.5 15.5l-5 5" stroke="#fff" stroke-width="1.6"/></g><g transform="translate(765,137)"><path transform="translate(0,0)" d="M2 8c0-6 7-6 10-4s7-2 9 2-2 7-6 6-4 2-7 2-6-2-6-6z" fill="#a8a8a8" stroke="#6e6e6e" stroke-width="0.9"/><path d="M2 22c0-5 3-9 8-8s-1 9-8 8z" fill="#7dbb7d" stroke="#4f8a4f"/><rect x="13" y="13" width="10" height="10" rx="2" fill="#d8323a"/><path d="M15.5 15.5l5 5M20.5 15.5l-5 5" stroke="#fff" stroke-width="1.6"/></g><g transform="translate(798,137)"><path d="M2 5c2-3 8-2 10-1s9-2 10 2-3 6-6 6-3 2-4 6-4 3-6 0-1-6-4-7z" fill="#7dbb7d" stroke="#444"/><path d="M4 12l3 10 3-8" fill="#d8b52a"/></g><g transform="translate(831,137)"><path d="M4 20c-4-4 0-10 6-14s12-4 12 1-6 10-12 14-4 3-6-1z" fill="#d9c24a" stroke="#444" stroke-width="0.9"/><path d="M7 17c-2-3 1-7 5-10s8-2 8 1-4 7-8 9-3 2-5 0z" fill="#7dbb7d"/></g><g transform="translate(864,137)"><path d="M2 3l7 12 6-9h7" fill="none" stroke="#d6d3cd" stroke-width="1.3"/><rect x="12" y="13" width="10" height="10" fill="#eeece8" stroke="#d0cdc7"/></g><g transform="translate(897,137)"><path d="M12 1v22M2 12h20" stroke="#555" stroke-width="1.2"/><path d="M15 14v9" stroke="#3a9a3a" stroke-width="2"/><path d="M9 14v7" stroke="#e33" stroke-width="1.5"/><rect x="10" y="10" width="4" height="4" fill="#ddd" stroke="#555" stroke-width="0.7"/><rect x="16" y="10" width="4" height="4" fill="#ddd" stroke="#555" stroke-width="0.7"/><rect x="17" y="1" width="6" height="6" fill="#e8c21a"/><rect x="1" y="17" width="6" height="6" fill="#fff" stroke="#e33"/></g><g transform="translate(930,137)"><path d="M2 9c0-5 4-7 8-6l2 10c-5 1-10 0-10-4z" fill="#a8a8a8" stroke="#6e6e6e" stroke-width="0.8"/><path d="M22 9c0-5-4-7-8-6l-2 10c5 1 10 0 10-4z" fill="#7dbb7d" stroke="#4f8a4f" stroke-width="0.8"/><path d="M9 4l5 14M15 4l-5 14" stroke="#888" stroke-width="1.2"/><circle cx="9" cy="20" r="2.8" fill="none" stroke="#d22" stroke-width="1.6"/><circle cx="15" cy="20" r="2.8" fill="none" stroke="#d22" stroke-width="1.6"/></g><g transform="translate(963,137)"><path d="M2 9c0-5 4-7 8-6l2 10c-5 1-10 0-10-4z" fill="#7dbb7d" stroke="#4f8a4f" stroke-width="0.8"/><path d="M22 9c0-5-4-7-8-6l-2 10c5 1 10 0 10-4z" fill="#7dbb7d" stroke="#4f8a4f" stroke-width="0.8"/><path d="M9 4l5 14M15 4l-5 14" stroke="#888" stroke-width="1.2"/><circle cx="9" cy="20" r="2.8" fill="none" stroke="#d22" stroke-width="1.6"/><circle cx="15" cy="20" r="2.8" fill="none" stroke="#d22" stroke-width="1.6"/></g><g transform="translate(996,137)"><path d="M2 8c0-5 5-6 10-4 5-2 10-1 10 4s-5 6-10 5c-5 1-10 0-10-5z" fill="#e6e3de" stroke="#d6d3cd"/><path d="M6 14c0 4 3 7 6 8" stroke="#d6d3cd" fill="none"/></g><g transform="translate(1029,137)"><path d="M2 5h8l3-3h9M2 12h8l3-3h9M2 19h8l3-3h9M2 7h20M2 14h20M2 21h20" stroke="#d6d3cd" fill="none"/></g><text x="1075" y="154" font-size="13" font-weight="bold" font-family="Liberation Sans" fill="#111">»</text><rect x="1098.5" y="137.0" width="1" height="1" fill="#b4b1ab"/><rect x="1101.5" y="137.0" width="1" height="1" fill="#b4b1ab"/><rect x="1098.5" y="140.0" width="1" height="1" fill="#b4b1ab"/><rect x="1101.5" y="140.0" width="1" height="1" fill="#b4b1ab"/><rect x="1098.5" y="143.0" width="1" height="1" fill="#b4b1ab"/><rect x="1101.5" y="143.0" width="1" height="1" fill="#b4b1ab"/><rect x="1098.5" y="146.0" width="1" height="1" fill="#b4b1ab"/><rect x="1101.5" y="146.0" width="1" height="1" fill="#b4b1ab"/><rect x="1098.5" y="149.0" width="1" height="1" fill="#b4b1ab"/><rect x="1101.5" y="149.0" width="1" height="1" fill="#b4b1ab"/><rect x="1098.5" y="152.0" width="1" height="1" fill="#b4b1ab"/><rect x="1101.5" y="152.0" width="1" height="1" fill="#b4b1ab"/><rect x="1098.5" y="155.0" width="1" height="1" fill="#b4b1ab"/><rect x="1101.5" y="155.0" width="1" height="1" fill="#b4b1ab"/><rect x="1098.5" y="158.0" width="1" height="1" fill="#b4b1ab"/><rect x="1101.5" y="158.0" width="1" height="1" fill="#b4b1ab"/><g transform="translate(1108,137)"><circle cx="12" cy="11" r="10" fill="#5a8fd0" stroke="#2a5a9a"/><path d="M2 11h20M12 1v20M5 4c4 3 10 3 14 0M5 18c4-3 10-3 14 0" stroke="#cfe0f5" stroke-width="0.9" fill="none"/><ellipse cx="7" cy="20" rx="4.5" ry="3.5" fill="#111"/><ellipse cx="17" cy="20" rx="4.5" ry="3.5" fill="#111"/><ellipse cx="7" cy="20.5" rx="2.5" ry="1.7" fill="#fff"/><ellipse cx="17" cy="20.5" rx="2.5" ry="1.7" fill="#fff"/></g></svg>
<div class="a" style="left:0;top:168px;width:51px;height:654px;background:linear-gradient(90deg,#f5f2ee,#f2efeb 70%,#ebe8e3)"></div>
<div class="a" style="left:51px;top:168px;width:255px;height:654px;background:#eeebe7;border-left:1px solid #b3b0aa"></div>
<div class="a tree" style="left:52px;top:219px;width:248px;height:132px"></div>
<div class="a tree" style="left:52px;top:406px;width:248px;height:416px"></div>
<div class="a" style="left:306px;top:169px;width:940px;height:653px;background:#fff;border:1px solid #aaa69f;border-right:none"></div>
<svg class="a" style="left:307px;top:170px" width="939" height="651" viewBox="0 0 939 651"><polygon points="368.6,28.8 373.1,36.3 386.4,40.6 385.6,48.8 400.6,47.1 415.7,41.3 421.9,42.1 424.4,45.1 438.2,45.1 450.2,50.8 458.2,46.3 468.2,47.6 485.8,50.1 510.8,65.1 519.6,80.1 588.4,107.7 627.0,107.7 642.0,100.2 664.6,98.9 679.6,100.2 687.1,106.4 684.6,110.2 692.1,115.2 700.9,125.2 712.1,122.7 747.2,139.0 774.7,154.0 787.2,165.2 798.5,162.7 801.0,165.2 809.8,175.3 807.3,190.3 799.8,200.3 779.7,207.8 772.2,213.1 548.4,213.1 533.3,185.3 527.1,175.3 524.6,175.3 478.2,170.3 479.5,161.5 483.3,130.2 478.2,125.2 458.2,110.2 449.5,111.4 455.7,115.2 464.5,135.2 472.5,150.2 468.2,158.2 430.7,161.5 421.9,162.7 398.1,167.3 403.1,171.5 390.6,180.3 319.3,130.2 321.8,102.7 326.8,97.6 333.0,67.6 353.1,45.1 363.1,43.8 368.6,28.8" fill="#d6f7c3" stroke="none"/>
<polygon points="827.3,213.1 842.3,190.3 862.4,175.3 882.4,162.7 892.4,142.7 896.2,122.7 892.4,116.4 879.9,120.2 868.6,110.2 874.9,107.7 862.4,102.7 879.9,87.6 887.4,87.1 899.9,70.1 922.4,57.6 939.0,57.1 939.0,213.1" fill="#d6f7c3" stroke="none"/>
<polygon points="445.7,170.3 460.7,175.3 465.7,190.3 463.2,205.3 443.2,213.1 439.4,213.1 443.2,213.1" fill="#d6f7c3" stroke="none"/>
<polygon points="439.4,216.8 453.2,213.0 510.8,213.0 513.3,216.8 522.1,225.5 524.6,218.0 533.3,214.3 548.4,238.0 559.6,263.1 563.4,280.6 568.4,303.1 567.1,306.9 568.4,313.2 584.7,333.2 585.4,345.7 524.6,335.7 514.6,436.1 485.0,430.1 430.9,419.1 413.2,413.3 415.7,408.3 423.2,339.4 429.4,286.9 438.2,223.0" fill="#d6f7c3" stroke="none"/>
<polygon points="321.8,298.1 343.0,289.4 380.6,288.1 388.1,295.6 405.6,310.6 415.7,339.4 400.6,340.7 394.4,347.0 365.6,343.2 344.3,343.2 335.5,335.7 323.0,314.4" fill="#d6f7c3" stroke="none"/>
<polygon points="385.6,288.1 428.2,286.9 423.2,339.4 418.2,339.4 405.6,311.9 388.1,294.4" fill="#d6f7c3" stroke="none"/>
<polygon points="313.0,318.2 320.5,314.4 328.0,328.2 341.8,343.2 325.5,352.0 313.0,343.2" fill="#d6f7c3" stroke="none"/>
<polygon points="563.4,426.1 575.9,403.3 588.4,380.8 593.4,370.7 595.9,365.7 610.9,373.2 608.4,385.8 580.9,426.1" fill="#d6f7c3" stroke="none"/>
<polygon points="550.9,213.0 625.0,213.0 625.0,275.6 605.9,260.6 578.4,230.5" fill="#d6f7c3" stroke="none"/>
<polygon points="627.0,213.0 664.6,213.0 682.1,223.0 694.6,224.3 690.8,230.5 699.6,253.1 692.1,275.6 687.1,285.6 688.3,309.4 694.6,319.4 685.8,314.4 665.8,310.6 663.3,283.1 627.0,278.1" fill="#d6f7c3" stroke="none"/>
<polygon points="702.1,253.1 732.2,235.5 759.7,234.3 769.7,253.1 769.7,266.8 755.9,273.1 747.2,280.1 758.4,288.1 747.2,315.7 738.4,328.2 738.4,335.7 724.6,344.4 703.4,354.5 699.6,348.2 697.1,318.2 690.8,295.6 692.1,275.6" fill="#d6f7c3" stroke="none"/>
<polygon points="733.4,213.0 737.2,220.5 744.7,213.0" fill="#d6f7c3" stroke="none"/>
<polygon points="792.2,243.0 791.0,238.0 827.3,214.3 827.3,213.0 939.0,213.0 939.0,228.0 932.5,238.0 931.2,250.6 919.9,273.1 902.4,281.9 872.4,288.1 849.8,284.4 839.8,285.6 838.6,301.9 784.7,293.1 784.7,283.1 792.2,263.1" fill="#d6f7c3" stroke="none"/>
<polygon points="700.9,426.1 702.1,415.8 747.2,345.7 782.2,318.7 821.0,321.2 839.8,349.5 884.9,404.5 902.4,426.1" fill="#d6f7c3" stroke="none"/>
<polygon points="694.6,383.3 702.1,360.7 705.9,360.7 710.9,369.5 698.4,383.3" fill="#d6f7c3" stroke="none"/>
<polygon points="389.4,439.0 420.7,439.0 413.2,454.0 413.2,467.8 430.7,475.3 421.9,491.6 398.1,479.1 385.6,464.0 388.1,451.5" fill="#d6f7c3" stroke="none"/>
<polygon points="430.7,484.1 433.2,475.3 447.0,479.1 473.2,474.1 510.8,476.6 509.5,484.1 485.8,485.3 460.7,491.6 445.7,490.3" fill="#d6f7c3" stroke="none"/>
<polygon points="520.8,482.8 528.3,469.0 548.4,439.0 575.4,439.0 567.1,462.8 533.3,484.1 529.6,496.6 522.1,495.3" fill="#d6f7c3" stroke="none"/>
<polygon points="702.1,439.0 909.9,439.0 914.9,475.3 712.1,489.1 707.1,454.0 703.4,449.0" fill="#d6f7c3" stroke="none"/>
<polygon points="713.4,490.3 848.6,479.1 846.1,509.1 842.3,514.1 837.3,515.4 789.7,521.6 712.1,527.9" fill="#d6f7c3" stroke="none"/>
<polygon points="712.1,529.1 789.7,522.9 788.5,524.1 786.0,552.9 791.0,552.9 793.5,545.4 822.3,542.9 821.0,574.2 816.0,581.7 836.1,609.3 720.9,620.5 714.6,606.8 720.9,584.2 722.1,573.0 712.1,556.7" fill="#d6f7c3" stroke="none"/>
<polygon points="821.0,575.5 838.6,571.7 844.8,586.7 824.8,591.2" fill="#d6f7c3" stroke="none"/>
<polygon points="185.5,340.5 219.3,346.3 260.6,361.3 298.2,383.8 312.0,410.1 317.0,416.4 318.2,427.6 317.0,436.4 298.2,440.2 278.2,436.4 268.1,430.2 263.1,420.1 248.1,415.1 223.1,398.9 203.0,380.1 179.3,361.3" fill="#d6f7c3" stroke="none"/>
<polygon points="275.7,352.0 300.7,353.8 300.7,370.1 303.2,370.1 303.2,378.8 320.7,383.8 323.2,396.3 317.0,410.1 298.2,383.8 273.2,368.8" fill="#d6f7c3" stroke="none"/>
<polygon points="339.5,345.0 348.3,343.8 393.3,347.5 400.8,340.5 414.6,340.5 420.9,357.5 417.1,386.3 398.3,396.3 368.3,426.4 362.0,417.6 352.0,383.8 339.5,363.8" fill="#d6f7c3" stroke="none"/>
<polygon points="328.2,376.3 338.2,365.1 352.0,383.8 360.8,418.9 344.5,432.7 333.2,400.1" fill="#d6f7c3" stroke="none"/>
<polygon points="354.5,427.6 360.8,420.1 368.3,426.4 393.3,403.9 414.6,388.8 414.6,408.9 408.4,412.6 395.8,425.1 390.8,435.2 384.6,445.2 379.6,433.9 367.0,436.4" fill="#d6f7c3" stroke="none"/>
<polygon points="419.6,367.6 429.6,366.3 437.1,376.3 438.4,386.3 433.4,396.3 415.9,410.1 414.6,392.6" fill="#d6f7c3" stroke="none"/>
<polygon points="420.9,330.0 485.0,330.0 485.0,430.2 430.9,418.9 415.9,413.9 428.4,405.1 439.6,392.6 438.4,376.3 423.4,350.0" fill="#d6f7c3" stroke="none"/>
<polygon points="387.1,440.2 405.8,416.4 414.6,412.6 430.9,418.9 413.4,455.2 412.1,469.0 430.9,475.2 422.1,491.5 393.3,477.7 385.8,462.7" fill="#d6f7c3" stroke="none"/>
<polygon points="430.9,475.2 445.9,479.0 463.4,474.7 485.0,474.0 485.0,485.2 460.9,492.7 439.6,487.7 429.6,482.7" fill="#d6f7c3" stroke="none"/>
<polygon points="700.9,425.0 902.4,425.0 910.0,440.0 702.0,440.0" fill="#d6f7c3" stroke="none"/>
<polygon points="563.4,425.0 581.0,425.0 575.4,440.0 548.4,440.0" fill="#d6f7c3" stroke="none"/>
<polygon points="623.5,213.0 628.5,213.0 628.5,277.0 623.5,276.0" fill="#d6f7c3" stroke="none"/>
<polygon points="664.0,213.0 750.0,213.0 734.0,231.0 701.0,254.0 686.0,225.0" fill="#d6f7c3" stroke="none"/>
<polyline points="368.6,28.8 373.1,36.3 386.4,40.6 385.6,48.8 400.6,47.1 415.7,41.3 421.9,42.1 424.4,45.1 438.2,45.1 450.2,50.8 458.2,46.3 468.2,47.6 485.8,50.1 510.8,65.1 519.6,80.1 588.4,107.7 627.0,107.7 642.0,100.2 664.6,98.9 679.6,100.2 687.1,106.4 684.6,110.2 692.1,115.2 700.9,125.2 712.1,122.7 747.2,139.0 774.7,154.0 787.2,165.2 798.5,162.7 801.0,165.2 809.8,175.3 807.3,190.3 799.8,200.3 779.7,207.8" fill="none" stroke="#707070" stroke-width="0.7" stroke-linejoin="round"/>
<polyline points="548.4,213.1 533.3,185.3 527.1,175.3 524.6,175.3 478.2,170.3 479.5,161.5 483.3,130.2 478.2,125.2 458.2,110.2 449.5,111.4 455.7,115.2 464.5,135.2 472.5,150.2 468.2,158.2 430.7,161.5 421.9,162.7 398.1,167.3 403.1,171.5 390.6,180.3 319.3,130.2 321.8,102.7 326.8,97.6 333.0,67.6 353.1,45.1 363.1,43.8 368.6,28.8 368.6,28.8" fill="none" stroke="#707070" stroke-width="0.7" stroke-linejoin="round"/>
<polyline points="827.3,213.1 842.3,190.3 862.4,175.3 882.4,162.7 892.4,142.7 896.2,122.7 892.4,116.4 879.9,120.2 868.6,110.2 874.9,107.7 862.4,102.7 879.9,87.6 887.4,87.1 899.9,70.1 922.4,57.6 939.0,57.1 939.0,213.1" fill="none" stroke="#707070" stroke-width="0.7" stroke-linejoin="round"/>
<polyline points="445.7,170.3 460.7,175.3 465.7,190.3 463.2,205.3 443.2,213.1" fill="none" stroke="#707070" stroke-width="0.7" stroke-linejoin="round"/>
<polyline points="443.2,213.1 445.7,170.3" fill="none" stroke="#707070" stroke-width="0.7" stroke-linejoin="round"/>
<polyline points="439.4,216.8 453.2,213.0" fill="none" stroke="#707070" stroke-width="0.7" stroke-linejoin="round"/>
<polyline points="510.8,213.0 513.3,216.8 522.1,225.5 524.6,218.0 533.3,214.3 548.4,238.0 559.6,263.1 563.4,280.6 568.4,303.1 567.1,306.9 568.4,313.2 584.7,333.2 585.4,345.7 524.6,335.7 514.6,436.1 485.0,430.1 430.9,419.1 413.2,413.3 415.7,408.3 423.2,339.4 429.4,286.9 438.2,223.0 439.4,216.8" fill="none" stroke="#707070" stroke-width="0.7" stroke-linejoin="round"/>
<polyline points="321.8,298.1 343.0,289.4 380.6,288.1 388.1,295.6 405.6,310.6 415.7,339.4 400.6,340.7 394.4,347.0 365.6,343.2 344.3,343.2 335.5,335.7 323.0,314.4 321.8,298.1" fill="none" stroke="#707070" stroke-width="0.7" stroke-linejoin="round"/>
<polyline points="385.6,288.1 428.2,286.9 423.2,339.4 418.2,339.4 405.6,311.9 388.1,294.4 385.6,288.1" fill="none" stroke="#707070" stroke-width="0.7" stroke-linejoin="round"/>
<polyline points="313.0,318.2 320.5,314.4 328.0,328.2 341.8,343.2 325.5,352.0 313.0,343.2" fill="none" stroke="#707070" stroke-width="0.7" stroke-linejoin="round"/>
<polyline points="563.4,426.1 575.9,403.3 588.4,380.8 593.4,370.7 595.9,365.7 610.9,373.2 608.4,385.8 580.9,426.1" fill="none" stroke="#707070" stroke-width="0.7" stroke-linejoin="round"/>
<polyline points="625.0,275.6 605.9,260.6 578.4,230.5 550.9,213.0" fill="none" stroke="#707070" stroke-width="0.7" stroke-linejoin="round"/>
<polyline points="664.6,213.0 682.1,223.0 694.6,224.3 690.8,230.5 699.6,253.1 692.1,275.6 687.1,285.6 688.3,309.4 694.6,319.4 685.8,314.4 665.8,310.6 663.3,283.1 627.0,278.1" fill="none" stroke="#707070" stroke-width="0.7" stroke-linejoin="round"/>
<polyline points="702.1,253.1 732.2,235.5 759.7,234.3 769.7,253.1 769.7,266.8 755.9,273.1 747.2,280.1 758.4,288.1 747.2,315.7 738.4,328.2 738.4,335.7 724.6,344.4 703.4,354.5 699.6,348.2 697.1,318.2 690.8,295.6 692.1,275.6 702.1,253.1" fill="none" stroke="#707070" stroke-width="0.7" stroke-linejoin="round"/>
<polyline points="733.4,213.0 737.2,220.5 744.7,213.0" fill="none" stroke="#707070" stroke-width="0.7" stroke-linejoin="round"/>
<polyline points="792.2,243.0 791.0,238.0 827.3,214.3" fill="none" stroke="#707070" stroke-width="0.7" stroke-linejoin="round"/>
<polyline points="939.0,213.0 939.0,228.0 932.5,238.0 931.2,250.6 919.9,273.1 902.4,281.9 872.4,288.1 849.8,284.4 839.8,285.6 838.6,301.9 784.7,293.1 784.7,283.1 792.2,263.1 792.2,243.0" fill="none" stroke="#707070" stroke-width="0.7" stroke-linejoin="round"/>
<polyline points="700.9,426.1 702.1,415.8 747.2,345.7 782.2,318.7 821.0,321.2 839.8,349.5 884.9,404.5 902.4,426.1" fill="none" stroke="#707070" stroke-width="0.7" stroke-linejoin="round"/>
<polyline points="694.6,383.3 702.1,360.7 705.9,360.7 710.9,369.5 698.4,383.3 694.6,383.3" fill="none" stroke="#707070" stroke-width="0.7" stroke-linejoin="round"/>
<polyline points="420.7,439.0 413.2,454.0 413.2,467.8 430.7,475.3 421.9,491.6 398.1,479.1 385.6,464.0 388.1,451.5 389.4,439.0" fill="none" stroke="#707070" stroke-width="0.7" stroke-linejoin="round"/>
<polyline points="430.7,484.1 433.2,475.3 447.0,479.1 473.2,474.1 510.8,476.6 509.5,484.1 485.8,485.3 460.7,491.6 445.7,490.3 430.7,484.1" fill="none" stroke="#707070" stroke-width="0.7" stroke-linejoin="round"/>
<polyline points="520.8,482.8 528.3,469.0 548.4,439.0" fill="none" stroke="#707070" stroke-width="0.7" stroke-linejoin="round"/>
<polyline points="575.4,439.0 567.1,462.8 533.3,484.1 529.6,496.6 522.1,495.3 520.8,482.8" fill="none" stroke="#707070" stroke-width="0.7" stroke-linejoin="round"/>
<polyline points="909.9,439.0 914.9,475.3 712.1,489.1 707.1,454.0 703.4,449.0 702.1,439.0" fill="none" stroke="#707070" stroke-width="0.7" stroke-linejoin="round"/>
<polyline points="713.4,490.3 848.6,479.1 846.1,509.1 842.3,514.1 837.3,515.4 789.7,521.6 712.1,527.9 713.4,490.3" fill="none" stroke="#707070" stroke-width="0.7" stroke-linejoin="round"/>
<polyline points="712.1,529.1 789.7,522.9 788.5,524.1 786.0,552.9 791.0,552.9 793.5,545.4 822.3,542.9 821.0,574.2 816.0,581.7 836.1,609.3 720.9,620.5 714.6,606.8 720.9,584.2 722.1,573.0 712.1,556.7 712.1,529.1" fill="none" stroke="#707070" stroke-width="0.7" stroke-linejoin="round"/>
<polyline points="821.0,575.5 838.6,571.7 844.8,586.7 824.8,591.2 821.0,575.5" fill="none" stroke="#707070" stroke-width="0.7" stroke-linejoin="round"/>
<polyline points="185.5,340.5 219.3,346.3 260.6,361.3 298.2,383.8 312.0,410.1 317.0,416.4 318.2,427.6 317.0,436.4 298.2,440.2 278.2,436.4 268.1,430.2 263.1,420.1 248.1,415.1 223.1,398.9 203.0,380.1 179.3,361.3 185.5,340.5" fill="none" stroke="#707070" stroke-width="0.7" stroke-linejoin="round"/>
<polyline points="275.7,352.0 300.7,353.8 300.7,370.1 303.2,370.1 303.2,378.8 320.7,383.8 323.2,396.3 317.0,410.1 298.2,383.8 273.2,368.8 275.7,352.0" fill="none" stroke="#707070" stroke-width="0.7" stroke-linejoin="round"/>
<polyline points="339.5,345.0 348.3,343.8 393.3,347.5 400.8,340.5 414.6,340.5 420.9,357.5 417.1,386.3 398.3,396.3 368.3,426.4 362.0,417.6 352.0,383.8 339.5,363.8 339.5,345.0" fill="none" stroke="#707070" stroke-width="0.7" stroke-linejoin="round"/>
<polyline points="328.2,376.3 338.2,365.1 352.0,383.8 360.8,418.9 344.5,432.7 333.2,400.1 328.2,376.3" fill="none" stroke="#707070" stroke-width="0.7" stroke-linejoin="round"/>
<polyline points="354.5,427.6 360.8,420.1 368.3,426.4 393.3,403.9 414.6,388.8 414.6,408.9 408.4,412.6 395.8,425.1 390.8,435.2 384.6,445.2 379.6,433.9 367.0,436.4 354.5,427.6" fill="none" stroke="#707070" stroke-width="0.7" stroke-linejoin="round"/>
<polyline points="419.6,367.6 429.6,366.3 437.1,376.3 438.4,386.3 433.4,396.3 415.9,410.1 414.6,392.6 419.6,367.6" fill="none" stroke="#707070" stroke-width="0.7" stroke-linejoin="round"/>
<polyline points="485.0,430.2 430.9,418.9 415.9,413.9 428.4,405.1 439.6,392.6 438.4,376.3 423.4,350.0 420.9,330.0" fill="none" stroke="#707070" stroke-width="0.7" stroke-linejoin="round"/>
<polyline points="387.1,440.2 405.8,416.4 414.6,412.6 430.9,418.9 413.4,455.2 412.1,469.0 430.9,475.2 422.1,491.5 393.3,477.7 385.8,462.7 387.1,440.2" fill="none" stroke="#707070" stroke-width="0.7" stroke-linejoin="round"/>
<polyline points="430.9,475.2 445.9,479.0 463.4,474.7 485.0,474.0" fill="none" stroke="#707070" stroke-width="0.7" stroke-linejoin="round"/>
<polyline points="485.0,485.2 460.9,492.7 439.6,487.7 429.6,482.7 430.9,475.2" fill="none" stroke="#707070" stroke-width="0.7" stroke-linejoin="round"/>
<polyline points="323.0,107.7 325.5,117.7 333.0,130.2 343.0,136.5 373.1,154.0 374.3,158.2 403.1,171.5" fill="none" stroke="#707070" stroke-width="3.2" stroke-linejoin="round"/>
<polyline points="323.0,107.7 325.5,117.7 333.0,130.2 343.0,136.5 373.1,154.0 374.3,158.2 403.1,171.5" fill="none" stroke="#fff" stroke-width="2" stroke-linejoin="round"/>
<polyline points="395.6,117.7 401.9,125.2 403.1,132.7 410.6,135.2 425.7,150.2 426.9,160.2" fill="none" stroke="#707070" stroke-width="3.2" stroke-linejoin="round"/>
<polyline points="395.6,117.7 401.9,125.2 403.1,132.7 410.6,135.2 425.7,150.2 426.9,160.2" fill="none" stroke="#fff" stroke-width="2" stroke-linejoin="round"/>
<polyline points="603.4,110.2 594.7,130.2 584.7,142.7 577.1,160.2" fill="none" stroke="#707070" stroke-width="3.2" stroke-linejoin="round"/>
<polyline points="603.4,110.2 594.7,130.2 584.7,142.7 577.1,160.2" fill="none" stroke="#fff" stroke-width="2" stroke-linejoin="round"/>
<polyline points="416.9,81.4 457.0,103.2" fill="none" stroke="#707070" stroke-width="3.2" stroke-linejoin="round"/>
<polyline points="416.9,81.4 457.0,103.2" fill="none" stroke="#fff" stroke-width="2" stroke-linejoin="round"/>
<polyline points="503.3,132.7 510.8,157.7 525.8,166.5 530.8,175.3" fill="none" stroke="#707070" stroke-width="3.2" stroke-linejoin="round"/>
<polyline points="503.3,132.7 510.8,157.7 525.8,166.5 530.8,175.3" fill="none" stroke="#fff" stroke-width="2" stroke-linejoin="round"/>
<polyline points="483.3,130.2 503.3,132.7" fill="none" stroke="#707070" stroke-width="0.8"/>
<polyline points="675.8,157.7 781.0,184.0" fill="none" stroke="#707070" stroke-width="0.8"/>
<polyline points="749.7,141.5 737.2,174.0" fill="none" stroke="#707070" stroke-width="0.8"/>
<polyline points="802.3,166.5 772.2,213.1" fill="none" stroke="#707070" stroke-width="0.8"/>
<polygon points="659.3,194.5 669.6,192.6 712.6,193.2 728.0,199.6 735.7,221.5 733.0,223.6 726.7,209.3 708.7,196.4 663.8,197.0" fill="#fff" stroke="#707070" stroke-width="0.7"/>
<polygon points="681.8,217.6 694.6,224.0 691.4,231.0 685.0,222.0" fill="#fff" stroke="#707070" stroke-width="0.7"/>
<ellipse cx="397.1" cy="72.6" rx="21.0" ry="16.3" fill="#fff" stroke="#707070" stroke-width="0.7"/>
<ellipse cx="637.0" cy="153.2" rx="10.5" ry="8.5" fill="#fff" stroke="#707070" stroke-width="0.7"/>
<ellipse cx="637.0" cy="154.0" rx="6.8" ry="5.0" fill="#769af8" stroke="#1a1a1a" stroke-width="0.8"/>
<ellipse cx="396.1" cy="72.6" rx="11.8" ry="8.9" fill="#769af8" stroke="#1a1a1a" stroke-width="0.8"/>
<polygon points="449.2,164.5 452.0,162.0 459.7,161.7 468.5,165.7 479.0,167.3 488.5,172.8 501.3,173.8 511.8,179.8 523.8,183.8 523.1,186.0 507.8,206.6 497.3,208.1 486.3,207.8 476.5,206.6 471.7,204.6 465.2,205.3 468.5,196.5 467.0,186.0 463.0,176.5 459.0,173.3 450.0,167.3" fill="#769af8" stroke="#1a1a1a" stroke-width="0.8" stroke-linejoin="round"/>
<polygon points="23.5,388.3 34.1,381.0 36.3,378.5 38.3,380.3 53.8,371.0 66.6,364.7 71.4,365.2 82.4,384.0 74.1,386.3 62.3,390.0 52.3,396.5 33.3,391.5 31.3,390.8 24.3,392.3 23.3,390.0" fill="#769af8" stroke="#1a1a1a" stroke-width="0.8" stroke-linejoin="round"/>
<polygon points="295.0,307.6 300.0,299.4 310.0,298.9 314.0,305.4 314.0,312.9 296.0,310.9" fill="#769af8" stroke="#1a1a1a" stroke-width="0.8" stroke-linejoin="round"/>
<polygon points="474.5,550.4 478.2,549.2 493.3,551.7 523.3,560.4 524.6,565.4 515.8,567.2 498.3,566.7 485.8,560.4" fill="#769af8" stroke="#1a1a1a" stroke-width="0.8" stroke-linejoin="round"/>
<polygon points="864.9,481.6 902.4,477.8 904.9,481.6 874.9,496.6 869.9,494.1" fill="#769af8" stroke="#1a1a1a" stroke-width="0.8" stroke-linejoin="round"/>
<polygon points="792.2,524.1 838.6,519.1 837.3,537.9 793.5,542.9" fill="#769af8" stroke="#1a1a1a" stroke-width="0.8" stroke-linejoin="round"/>
<polygon points="307.0,341.3 330.7,363.8 309.5,372.6 308.2,357.5" fill="#769af8" stroke="#1a1a1a" stroke-width="0.8" stroke-linejoin="round"/>
<polygon points="303.2,443.9 318.2,438.9 323.2,417.6 327.0,416.4 333.2,426.4 340.8,436.4 342.0,455.2 338.2,462.7 333.2,461.4" fill="#769af8" stroke="#1a1a1a" stroke-width="0.8" stroke-linejoin="round"/>
<polygon points="606.2,587.3 607.8,586.4 614.5,586.6 617.4,589.3 620.6,593.8 623.2,594.7 628.6,594.1 630.9,591.8 635.4,591.2 637.9,588.9 641.8,587.3 645.6,588.0 648.5,597.6 645.6,599.5 637.9,601.5 630.2,603.1 623.2,602.7 616.8,600.8 613.5,598.3 612.3,595.0 613.5,592.2 613.9,590.5 611.6,588.9 607.1,588.6" fill="#769af8" stroke="#1a1a1a" stroke-width="0.9" stroke-linejoin="round"/>
<polyline points="88.6,159.2 83.3,216.6" fill="none" stroke="#dc1e2b" stroke-width="2.6" stroke-linejoin="round" stroke-linecap="round"/>
<polyline points="267.9,183.3 254.1,160.2 251.6,150.2 260.4,139.0 280.4,128.2 309.2,122.7 314.8,118.6" fill="none" stroke="#dc1e2b" stroke-width="2.6" stroke-linejoin="round" stroke-linecap="round"/>
<polyline points="310.5,123.9 319.3,115.2 320.5,100.2 324.3,98.9 345.5,113.9 365.6,117.7 385.6,116.4 413.2,111.4 445.7,108.9 458.2,103.9 497.0,117.7 530.8,136.5 563.4,152.7 598.4,171.5" fill="none" stroke="#dc1e2b" stroke-width="2.6" stroke-linejoin="round" stroke-linecap="round"/>
<polyline points="598.4,171.5 628.1,157.5" fill="none" stroke="#dc1e2b" stroke-width="2.6" stroke-linejoin="round" stroke-linecap="round"/>
<polyline points="598.4,172.8 628.4,177.9" fill="none" stroke="#dc1e2b" stroke-width="2.6" stroke-linejoin="round" stroke-linecap="round"/>
<polyline points="598.4,171.5 598.4,180.3 590.9,192.8 588.4,196.5 533.3,175.3" fill="none" stroke="#dc1e2b" stroke-width="2.6" stroke-linejoin="round" stroke-linecap="round"/>
<polyline points="600.9,175.3 616.0,185.3 618.5,192.8 629.9,194.9" fill="none" stroke="#dc1e2b" stroke-width="2.6" stroke-linejoin="round" stroke-linecap="round"/>
<polyline points="452.7,62.1 460.7,80.1 462.0,90.1 457.0,102.7 448.2,107.7 437.4,108.2" fill="none" stroke="#dc1e2b" stroke-width="2.6" stroke-linejoin="round" stroke-linecap="round"/>
<polyline points="593.9,106.4 609.7,110.2 628.4,106.5" fill="none" stroke="#dc1e2b" stroke-width="2.6" stroke-linejoin="round" stroke-linecap="round"/>
<polyline points="528.3,205.3 535.2,216.0" fill="none" stroke="#dc1e2b" stroke-width="2.6" stroke-linejoin="round" stroke-linecap="round"/>
<polyline points="624.0,108.2 642.0,97.6 664.6,95.1 694.6,90.1 709.6,90.1 704.6,86.4 699.6,62.6 700.9,53.8 705.9,53.1 709.6,55.6 762.2,63.8 779.7,70.1 809.8,77.6 837.3,82.6 847.3,80.1 869.9,76.4 877.4,67.6 889.9,53.8 907.4,48.8 942.4,45.2" fill="none" stroke="#dc1e2b" stroke-width="2.6" stroke-linejoin="round" stroke-linecap="round"/>
<polyline points="709.6,90.1 714.6,95.1 725.9,127.7 802.3,164.0" fill="none" stroke="#dc1e2b" stroke-width="2.6" stroke-linejoin="round" stroke-linecap="round"/>
<polyline points="623.5,177.7 652.0,178.3 693.3,138.2 742.2,145.2 748.4,140.2" fill="none" stroke="#dc1e2b" stroke-width="2.6" stroke-linejoin="round" stroke-linecap="round"/>
<polyline points="807.3,150.2 803.5,159.0 802.3,164.0 787.2,175.3 762.2,200.3 747.2,215.6" fill="none" stroke="#dc1e2b" stroke-width="2.6" stroke-linejoin="round" stroke-linecap="round"/>
<polyline points="803.5,159.0 813.5,160.2 821.0,150.2 823.5,149.0" fill="none" stroke="#dc1e2b" stroke-width="2.6" stroke-linejoin="round" stroke-linecap="round"/>
<polyline points="814.8,165.2 824.8,164.0 827.3,154.0 817.3,135.2 824.8,110.2 852.3,111.4 852.8,107.2" fill="none" stroke="#dc1e2b" stroke-width="2.6" stroke-linejoin="round" stroke-linecap="round"/>
<polyline points="814.8,165.2 813.5,175.3 824.8,182.8 839.8,190.3 839.8,197.8 814.4,215.0" fill="none" stroke="#dc1e2b" stroke-width="2.6" stroke-linejoin="round" stroke-linecap="round"/>
<polyline points="623.9,192.5 667.7,214.7" fill="none" stroke="#dc1e2b" stroke-width="2.6" stroke-linejoin="round" stroke-linecap="round"/>
<polyline points="623.8,157.9 634.5,153.2" fill="none" stroke="#dc1e2b" stroke-width="2.6" stroke-linejoin="round" stroke-linecap="round"/>
<polyline points="84.6,209.5 82.6,243.0 75.1,278.1 86.4,280.1 90.1,285.6 93.1,299.4 87.6,320.7 83.9,338.2 78.9,344.4 72.6,348.2 71.4,358.2 75.1,368.2 85.1,385.8 91.4,390.8 105.2,399.5 110.2,404.5" fill="none" stroke="#dc1e2b" stroke-width="2.6" stroke-linejoin="round" stroke-linecap="round"/>
<polyline points="47.6,334.4 48.8,339.4 57.6,343.2 65.1,341.9 71.4,345.7" fill="none" stroke="#dc1e2b" stroke-width="2.6" stroke-linejoin="round" stroke-linecap="round"/>
<polyline points="68.9,339.4 70.1,353.2" fill="none" stroke="#dc1e2b" stroke-width="2.6" stroke-linejoin="round" stroke-linecap="round"/>
<polyline points="83.4,385.3 74.1,386.5 63.6,390.8 55.3,397.0 27.0,408.3 25.0,410.0 19.0,429.4" fill="none" stroke="#dc1e2b" stroke-width="2.6" stroke-linejoin="round" stroke-linecap="round"/>
<polyline points="135.2,272.3 131.4,288.1 134.0,300.6 140.2,306.9 146.5,320.7 144.7,328.2 151.5,349.5 162.7,358.2 175.3,365.7" fill="none" stroke="#dc1e2b" stroke-width="2.6" stroke-linejoin="round" stroke-linecap="round"/>
<polyline points="531.5,210.0 548.4,238.0 553.4,250.6 560.9,263.1 562.1,278.1 565.9,288.1 570.9,305.6 580.9,309.4 608.4,328.2 618.5,348.2 617.2,365.7 608.4,385.8 578.9,429.0" fill="none" stroke="#dc1e2b" stroke-width="2.6" stroke-linejoin="round" stroke-linecap="round"/>
<polyline points="526.3,309.4 515.5,429.6" fill="none" stroke="#dc1e2b" stroke-width="2.6" stroke-linejoin="round" stroke-linecap="round"/>
<polyline points="524.6,335.7 590.9,347.0 595.9,358.2 593.4,368.2" fill="none" stroke="#dc1e2b" stroke-width="2.6" stroke-linejoin="round" stroke-linecap="round"/>
<polyline points="523.3,357.0 628.4,373.8" fill="none" stroke="#dc1e2b" stroke-width="2.6" stroke-linejoin="round" stroke-linecap="round"/>
<polyline points="311.9,407.5 319.1,429.4" fill="none" stroke="#dc1e2b" stroke-width="2.6" stroke-linejoin="round" stroke-linecap="round"/>
<polyline points="661.5,211.3 682.1,223.0 692.1,235.5 700.9,254.3 692.1,275.6 690.8,295.6 697.1,318.2 699.6,353.2 695.9,378.2 689.6,393.3 675.8,429.3" fill="none" stroke="#dc1e2b" stroke-width="2.6" stroke-linejoin="round" stroke-linecap="round"/>
<polyline points="700.9,254.3 709.6,248.1 734.7,231.8 751.9,210.3" fill="none" stroke="#dc1e2b" stroke-width="2.6" stroke-linejoin="round" stroke-linecap="round"/>
<polyline points="734.7,231.8 777.2,231.8 791.0,236.0 819.9,210.7" fill="none" stroke="#dc1e2b" stroke-width="2.6" stroke-linejoin="round" stroke-linecap="round"/>
<polyline points="623.6,372.6 688.3,384.5 690.8,393.3" fill="none" stroke="#dc1e2b" stroke-width="2.6" stroke-linejoin="round" stroke-linecap="round"/>
<polyline points="807.3,308.9 844.8,311.9 866.1,323.2 881.1,331.9 942.1,363.6" fill="none" stroke="#dc1e2b" stroke-width="2.6" stroke-linejoin="round" stroke-linecap="round"/>
<polyline points="866.1,323.2 862.4,299.4" fill="none" stroke="#dc1e2b" stroke-width="2.6" stroke-linejoin="round" stroke-linecap="round"/>
<polyline points="867.4,338.2 873.6,325.7 879.9,321.9 912.4,294.4 912.4,285.6" fill="none" stroke="#dc1e2b" stroke-width="2.6" stroke-linejoin="round" stroke-linecap="round"/>
<polyline points="902.4,301.9 901.2,293.1 904.9,291.9" fill="none" stroke="#dc1e2b" stroke-width="2.6" stroke-linejoin="round" stroke-linecap="round"/>
<polyline points="937.5,348.2 918.7,313.2 917.4,299.4 921.2,304.4 932.5,305.6 937.5,309.4" fill="none" stroke="#dc1e2b" stroke-width="2.6" stroke-linejoin="round" stroke-linecap="round"/>
<polyline points="939.9,382.4 926.5,429.4" fill="none" stroke="#dc1e2b" stroke-width="2.6" stroke-linejoin="round" stroke-linecap="round"/>
<polyline points="807.3,398.3 807.3,402.0 819.8,402.0 828.6,397.0 884.9,404.5 904.6,428.8" fill="none" stroke="#dc1e2b" stroke-width="2.6" stroke-linejoin="round" stroke-linecap="round"/>
<polyline points="18.6,435.7 5.0,476.6 -3.1,480.6" fill="none" stroke="#dc1e2b" stroke-width="2.6" stroke-linejoin="round" stroke-linecap="round"/>
<polyline points="-3.4,488.2 10.0,491.6 40.1,499.1 100.2,517.9 200.3,546.7 315.3,580.2" fill="none" stroke="#dc1e2b" stroke-width="2.6" stroke-linejoin="round" stroke-linecap="round"/>
<polyline points="-2.5,519.1 5.0,526.6 57.6,583.0 75.1,589.2 110.2,585.0 136.5,584.2 162.7,599.2" fill="none" stroke="#dc1e2b" stroke-width="2.6" stroke-linejoin="round" stroke-linecap="round"/>
<polyline points="279.5,438.1 296.7,442.8 315.4,438.2" fill="none" stroke="#dc1e2b" stroke-width="2.6" stroke-linejoin="round" stroke-linecap="round"/>
<polyline points="296.7,442.8 314.7,457.5" fill="none" stroke="#dc1e2b" stroke-width="2.6" stroke-linejoin="round" stroke-linecap="round"/>
<polyline points="309.9,455.0 340.5,470.3 354.3,466.0 413.2,500.3 463.2,541.7 473.2,546.7 503.3,550.4 528.3,559.2 532.1,565.4" fill="none" stroke="#dc1e2b" stroke-width="2.6" stroke-linejoin="round" stroke-linecap="round"/>
<polyline points="516.1,435.5 508.3,517.9 500.8,549.2" fill="none" stroke="#dc1e2b" stroke-width="2.6" stroke-linejoin="round" stroke-linecap="round"/>
<polyline points="508.3,517.9 485.8,530.4 500.8,549.2" fill="none" stroke="#dc1e2b" stroke-width="2.6" stroke-linejoin="round" stroke-linecap="round"/>
<polyline points="509.5,502.8 529.6,512.9 578.4,540.4" fill="none" stroke="#dc1e2b" stroke-width="2.6" stroke-linejoin="round" stroke-linecap="round"/>
<polyline points="529.6,512.9 532.1,491.6 530.8,489.1 567.1,464.0 576.5,435.7" fill="none" stroke="#dc1e2b" stroke-width="2.6" stroke-linejoin="round" stroke-linecap="round"/>
<polyline points="532.1,565.4 535.8,565.4 553.4,560.4 578.4,540.4 605.9,512.9 627.1,485.0" fill="none" stroke="#dc1e2b" stroke-width="2.6" stroke-linejoin="round" stroke-linecap="round"/>
<polyline points="535.8,565.4 535.8,554.2 563.4,536.6 565.9,534.1" fill="none" stroke="#dc1e2b" stroke-width="2.6" stroke-linejoin="round" stroke-linecap="round"/>
<polyline points="532.1,565.4 528.3,589.2 523.3,615.5" fill="none" stroke="#dc1e2b" stroke-width="2.6" stroke-linejoin="round" stroke-linecap="round"/>
<polyline points="578.4,540.4 613.5,636.8" fill="none" stroke="#dc1e2b" stroke-width="2.6" stroke-linejoin="round" stroke-linecap="round"/>
<polyline points="309.7,578.1 480.8,634.3 518.3,643.1 563.4,641.8 628.4,633.9" fill="none" stroke="#dc1e2b" stroke-width="2.6" stroke-linejoin="round" stroke-linecap="round"/>
<polyline points="480.8,634.3 483.3,641.8 503.3,650.6" fill="none" stroke="#dc1e2b" stroke-width="2.6" stroke-linejoin="round" stroke-linecap="round"/>
<polyline points="613.5,629.3 628.4,625.4" fill="none" stroke="#dc1e2b" stroke-width="2.6" stroke-linejoin="round" stroke-linecap="round"/>
<polyline points="624.9,490.6 659.5,444.0 670.0,437.1" fill="none" stroke="#dc1e2b" stroke-width="2.6" stroke-linejoin="round" stroke-linecap="round"/>
<polyline points="908.2,436.0 918.7,454.0 924.8,435.7" fill="none" stroke="#dc1e2b" stroke-width="2.6" stroke-linejoin="round" stroke-linecap="round"/>
<polyline points="918.7,454.0 917.4,476.6 891.1,561.7 892.4,594.2 898.7,624.3 897.4,636.8 888.3,655.2" fill="none" stroke="#dc1e2b" stroke-width="2.6" stroke-linejoin="round" stroke-linecap="round"/>
<polyline points="917.4,476.6 931.2,477.8 941.5,487.8" fill="none" stroke="#dc1e2b" stroke-width="2.6" stroke-linejoin="round" stroke-linecap="round"/>
<polyline points="712.1,527.9 789.7,521.6 837.3,515.4 862.4,501.6 859.8,495.3" fill="none" stroke="#dc1e2b" stroke-width="2.6" stroke-linejoin="round" stroke-linecap="round"/>
<polyline points="842.3,515.4 837.3,545.4 831.1,547.9 827.3,559.2 834.8,564.2 853.6,611.8" fill="none" stroke="#dc1e2b" stroke-width="2.6" stroke-linejoin="round" stroke-linecap="round"/>
<polyline points="834.8,560.9 891.1,561.7" fill="none" stroke="#dc1e2b" stroke-width="2.6" stroke-linejoin="round" stroke-linecap="round"/>
<polyline points="849.8,568.7 874.9,571.7 874.9,589.2" fill="none" stroke="#dc1e2b" stroke-width="2.6" stroke-linejoin="round" stroke-linecap="round"/>
<polyline points="838.6,564.2 839.8,569.2 849.8,568.7" fill="none" stroke="#dc1e2b" stroke-width="2.6" stroke-linejoin="round" stroke-linecap="round"/>
<polyline points="847.3,574.2 862.4,584.2 874.9,589.2 892.4,594.2" fill="none" stroke="#dc1e2b" stroke-width="2.6" stroke-linejoin="round" stroke-linecap="round"/>
<polyline points="892.4,571.7 935.0,569.2 939.0,567.9 935.0,562.9" fill="none" stroke="#dc1e2b" stroke-width="2.6" stroke-linejoin="round" stroke-linecap="round"/>
<polyline points="623.5,634.8 719.6,620.5 814.8,610.5 842.3,611.8 897.4,621.8 942.4,631.3" fill="none" stroke="#dc1e2b" stroke-width="2.6" stroke-linejoin="round" stroke-linecap="round"/>
<polyline points="644.5,633.0 652.0,644.3 664.8,654.2" fill="none" stroke="#dc1e2b" stroke-width="2.6" stroke-linejoin="round" stroke-linecap="round"/>
<polyline points="175.3,365.8 183.0,370.1 195.5,373.8 208.1,390.1 223.1,398.9 233.1,407.6 248.1,415.1 268.1,430.2 278.2,436.4 295.7,441.4 308.2,437.7 317.0,436.4 318.2,427.6 317.0,416.4 312.0,410.1 298.2,383.8" fill="none" stroke="#dc1e2b" stroke-width="2.6" stroke-linejoin="round" stroke-linecap="round"/>
<polyline points="295.7,441.4 313.2,457.7 325.7,465.2 340.8,470.2 353.3,466.5 363.3,472.7 413.4,500.3 438.4,520.3 468.6,545.3" fill="none" stroke="#dc1e2b" stroke-width="2.6" stroke-linejoin="round" stroke-linecap="round"/>
<polyline points="604.6,603.4 614.2,602.7 623.2,604.0 630.2,605.0 637.9,602.7 652.7,599.9 656.6,593.8" fill="none" stroke="#dc1e2b" stroke-width="2.6" stroke-linejoin="round" stroke-linecap="round"/>
<polyline points="20.0,426.0 17.5,439.0" fill="none" stroke="#dc1e2b" stroke-width="2.6" stroke-linejoin="round" stroke-linecap="round"/>
<polyline points="581.0,426.0 575.4,439.0" fill="none" stroke="#dc1e2b" stroke-width="2.6" stroke-linejoin="round" stroke-linecap="round"/>
<polyline points="515.8,426.0 515.8,439.0" fill="none" stroke="#dc1e2b" stroke-width="2.6" stroke-linejoin="round" stroke-linecap="round"/>
<polyline points="677.0,426.0 667.0,439.0" fill="none" stroke="#dc1e2b" stroke-width="2.6" stroke-linejoin="round" stroke-linecap="round"/>
<polyline points="927.5,426.0 923.7,439.0" fill="none" stroke="#dc1e2b" stroke-width="2.6" stroke-linejoin="round" stroke-linecap="round"/>
<polyline points="902.4,426.0 910.0,439.0" fill="none" stroke="#dc1e2b" stroke-width="2.6" stroke-linejoin="round" stroke-linecap="round"/>
<rect x="807.5" y="140.5" width="4.5" height="2.0" fill="#a3a3a3" stroke="#2e2e2e" stroke-width="0.7" transform="rotate(45 809.8 141.5)"/>
<rect x="818.8" y="146.7" width="4.5" height="2.0" fill="#a3a3a3" stroke="#2e2e2e" stroke-width="0.7" transform="rotate(-45 821.0 147.7)"/>
<rect x="807.5" y="154.2" width="4.5" height="2.0" fill="#a3a3a3" stroke="#2e2e2e" stroke-width="0.7" transform="rotate(-60 809.8 155.2)"/>
<rect x="818.8" y="163.0" width="4.5" height="2.0" fill="#a3a3a3" stroke="#2e2e2e" stroke-width="0.7" transform="rotate(-30 821.0 164.0)"/>
<circle cx="81.4" cy="286.4" r="1.4" fill="#999" stroke="#333" stroke-width="0.6"/>
<circle cx="86.4" cy="291.9" r="1.4" fill="#999" stroke="#333" stroke-width="0.6"/>
<circle cx="87.1" cy="296.9" r="1.4" fill="#999" stroke="#333" stroke-width="0.6"/>
<circle cx="87.1" cy="301.9" r="1.4" fill="#999" stroke="#333" stroke-width="0.6"/>
<circle cx="83.4" cy="312.4" r="1.6" fill="#769af8" stroke="#333" stroke-width="0.6"/>
<circle cx="82.1" cy="317.7" r="1.6" fill="#769af8" stroke="#333" stroke-width="0.6"/>
<rect x="55.3" y="327.9" width="4.5" height="2.0" fill="#a3a3a3" stroke="#2e2e2e" stroke-width="0.7" transform="rotate(0 57.6 328.9)"/>
<rect x="67.9" y="335.4" width="4.5" height="2.0" fill="#a3a3a3" stroke="#2e2e2e" stroke-width="0.7" transform="rotate(-60 70.1 336.4)"/>
<rect x="76.6" y="334.7" width="4.5" height="2.0" fill="#a3a3a3" stroke="#2e2e2e" stroke-width="0.7" transform="rotate(-30 78.9 335.7)"/>
<rect x="109.7" y="399.3" width="4.5" height="2.0" fill="#a3a3a3" stroke="#2e2e2e" stroke-width="0.7" transform="rotate(30 111.9 400.3)"/>
<rect x="800.0" y="396.0" width="4.5" height="2.0" fill="#a3a3a3" stroke="#2e2e2e" stroke-width="0.7" transform="rotate(0 802.3 397.0)"/>
<rect x="900.2" y="287.1" width="4.5" height="2.0" fill="#a3a3a3" stroke="#2e2e2e" stroke-width="0.7" transform="rotate(0 902.4 288.1)"/>
<rect x="907.7" y="287.1" width="4.5" height="2.0" fill="#a3a3a3" stroke="#2e2e2e" stroke-width="0.7" transform="rotate(0 909.9 288.1)"/>
<rect x="893.9" y="293.4" width="4.5" height="2.0" fill="#a3a3a3" stroke="#2e2e2e" stroke-width="0.7" transform="rotate(0 896.2 294.4)"/>
<rect x="907.7" y="291.6" width="4.5" height="2.0" fill="#a3a3a3" stroke="#2e2e2e" stroke-width="0.7" transform="rotate(0 909.9 292.6)"/>
<rect x="860.1" y="293.4" width="4.5" height="2.0" fill="#a3a3a3" stroke="#2e2e2e" stroke-width="0.7" transform="rotate(0 862.4 294.4)"/>
<rect x="930.2" y="300.9" width="4.5" height="2.0" fill="#a3a3a3" stroke="#2e2e2e" stroke-width="0.7" transform="rotate(0 932.5 301.9)"/>
<rect x="918.9" y="295.9" width="4.5" height="2.0" fill="#a3a3a3" stroke="#2e2e2e" stroke-width="0.7" transform="rotate(0 921.2 296.9)"/>
<rect x="860.1" y="338.4" width="4.5" height="2.0" fill="#a3a3a3" stroke="#2e2e2e" stroke-width="0.7" transform="rotate(0 862.4 339.4)"/>
<rect x="816.3" y="399.8" width="4.5" height="2.0" fill="#a3a3a3" stroke="#2e2e2e" stroke-width="0.7" transform="rotate(0 818.5 400.8)"/>
<rect x="792.5" y="394.0" width="4.5" height="2.0" fill="#a3a3a3" stroke="#2e2e2e" stroke-width="0.7" transform="rotate(0 794.8 395.0)"/>
<rect x="564.9" y="527.6" width="12.0" height="4.0" fill="#a3a3a3" stroke="#2e2e2e" stroke-width="0.7" transform="rotate(-55 570.9 529.6)"/>
<rect x="518.8" y="549.7" width="20.0" height="4.0" fill="#a3a3a3" stroke="#2e2e2e" stroke-width="0.7" transform="rotate(-12 528.8 551.7)"/>
<rect x="551.1" y="547.7" width="6.0" height="3.0" fill="#a3a3a3" stroke="#2e2e2e" stroke-width="0.7" transform="rotate(45 554.1 549.2)"/>
<rect x="560.1" y="540.9" width="2.5" height="2.5" fill="#a3a3a3" stroke="#2e2e2e" stroke-width="0.7" transform="rotate(0 561.4 542.2)"/>
<rect x="503.8" y="540.7" width="9.0" height="2.0" fill="#a3a3a3" stroke="#2e2e2e" stroke-width="0.7" transform="rotate(0 508.3 541.7)"/>
<rect x="613.5" y="618.8" width="5.0" height="6.0" fill="#a3a3a3" stroke="#2e2e2e" stroke-width="0.7" transform="rotate(0 616.0 621.8)"/>
<rect x="827.6" y="555.2" width="7.0" height="7.0" fill="#a3a3a3" stroke="#2e2e2e" stroke-width="0.7" transform="rotate(0 831.1 558.7)"/>
<rect x="865.5" y="594.2" width="23.8" height="10.0" fill="#a3a3a3" stroke="#2e2e2e" stroke-width="0.7" transform="rotate(-10 877.4 599.2)"/>
<rect x="857.3" y="553.7" width="5.0" height="5.0" fill="#a3a3a3" stroke="#2e2e2e" stroke-width="0.7" transform="rotate(0 859.8 556.2)"/>
<rect x="899.7" y="553.4" width="5.5" height="2.5" fill="#a3a3a3" stroke="#2e2e2e" stroke-width="0.7" transform="rotate(45 902.4 554.7)"/>
<rect x="824.8" y="546.9" width="2.5" height="7.0" fill="#a3a3a3" stroke="#2e2e2e" stroke-width="0.7" transform="rotate(0 826.0 550.4)"/>
<rect x="830.6" y="546.9" width="4.5" height="4.5" fill="#a3a3a3" stroke="#2e2e2e" stroke-width="0.7" transform="rotate(0 832.8 549.2)"/>
<rect x="895.7" y="565.2" width="3.5" height="5.5" fill="#a3a3a3" stroke="#2e2e2e" stroke-width="0.7" transform="rotate(0 897.4 567.9)"/>
<rect x="901.9" y="565.2" width="3.5" height="5.5" fill="#a3a3a3" stroke="#2e2e2e" stroke-width="0.7" transform="rotate(0 903.7 567.9)"/>
<rect x="908.2" y="565.2" width="3.5" height="5.5" fill="#a3a3a3" stroke="#2e2e2e" stroke-width="0.7" transform="rotate(0 909.9 567.9)"/>
<rect x="914.4" y="563.9" width="3.5" height="5.5" fill="#a3a3a3" stroke="#2e2e2e" stroke-width="0.7" transform="rotate(0 916.2 566.7)"/>
<rect x="844.8" y="579.2" width="10.0" height="2.5" fill="#a3a3a3" stroke="#2e2e2e" stroke-width="0.7" transform="rotate(40 849.8 580.5)"/>
<rect x="849.8" y="588.0" width="7.5" height="2.5" fill="#a3a3a3" stroke="#2e2e2e" stroke-width="0.7" transform="rotate(40 853.6 589.2)"/>
<rect x="836.1" y="591.0" width="7.5" height="2.5" fill="#a3a3a3" stroke="#2e2e2e" stroke-width="0.7" transform="rotate(20 839.8 592.2)"/>
<rect x="848.3" y="602.5" width="3.0" height="3.5" fill="#a3a3a3" stroke="#2e2e2e" stroke-width="0.7" transform="rotate(0 849.8 604.2)"/>
<rect x="869.4" y="583.7" width="3.5" height="3.5" fill="#a3a3a3" stroke="#2e2e2e" stroke-width="0.7" transform="rotate(0 871.1 585.5)"/>
<rect x="874.9" y="587.2" width="10.0" height="2.5" fill="#a3a3a3" stroke="#2e2e2e" stroke-width="0.7" transform="rotate(0 879.9 588.5)"/>
<rect x="932.0" y="587.5" width="3.5" height="3.5" fill="#a3a3a3" stroke="#2e2e2e" stroke-width="0.7" transform="rotate(0 933.7 589.2)"/>
<rect x="929.5" y="644.6" width="3.5" height="4.5" fill="#a3a3a3" stroke="#2e2e2e" stroke-width="0.7" transform="rotate(0 931.2 646.8)"/>
<rect x="857.3" y="494.8" width="5.0" height="2.5" fill="#a3a3a3" stroke="#2e2e2e" stroke-width="0.7" transform="rotate(45 859.8 496.1)"/>
<rect x="873.1" y="565.4" width="3.5" height="2.5" fill="#a3a3a3" stroke="#2e2e2e" stroke-width="0.7" transform="rotate(0 874.9 566.7)"/>
<rect x="828.6" y="568.4" width="5.0" height="2.5" fill="#a3a3a3" stroke="#2e2e2e" stroke-width="0.7" transform="rotate(0 831.1 569.7)"/>
<rect x="933.7" y="575.5" width="2.5" height="2.5" fill="#a3a3a3" stroke="#2e2e2e" stroke-width="0.7" transform="rotate(0 935.0 576.7)"/></svg>
<div class="a" style="left:1245px;top:169px;width:1px;height:653px;background:#aaa69f"></div>
<div class="a" style="left:306px;top:821px;width:940px;height:1px;background:#aaa69f"></div>
<div class="a" style="left:0;top:822px;width:1246px;height:31px;background:#eeebe7"></div>
<svg class="a" style="left:0;top:0" width="1246" height="853"><rect x="18" y="176" width="1" height="1" fill="#b4b1ab"/><rect x="18" y="178" width="1" height="1" fill="#b4b1ab"/><rect x="21" y="176" width="1" height="1" fill="#b4b1ab"/><rect x="21" y="178" width="1" height="1" fill="#b4b1ab"/><rect x="24" y="176" width="1" height="1" fill="#b4b1ab"/><rect x="24" y="178" width="1" height="1" fill="#b4b1ab"/><rect x="27" y="176" width="1" height="1" fill="#b4b1ab"/><rect x="27" y="178" width="1" height="1" fill="#b4b1ab"/><rect x="30" y="176" width="1" height="1" fill="#b4b1ab"/><rect x="30" y="178" width="1" height="1" fill="#b4b1ab"/><rect x="33" y="176" width="1" height="1" fill="#b4b1ab"/><rect x="33" y="178" width="1" height="1" fill="#b4b1ab"/><circle cx="25" cy="196.5" r="11" fill="#4cb54c"/><path d="M25 185.5a11 11 0 0 1 0 22z" fill="#3fa83f"/><path d="M21 196.5l8-4.5M21 196.5l8 4.5" stroke="#fff" stroke-width="1.6"/><circle cx="20.5" cy="196.5" r="2.6" fill="#fff"/><circle cx="29.5" cy="191.5" r="2.6" fill="#fff"/><circle cx="29.5" cy="201.5" r="2.6" fill="#fff"/><rect x="18" y="223" width="1" height="1" fill="#b4b1ab"/><rect x="18" y="225" width="1" height="1" fill="#b4b1ab"/><rect x="21" y="223" width="1" height="1" fill="#b4b1ab"/><rect x="21" y="225" width="1" height="1" fill="#b4b1ab"/><rect x="24" y="223" width="1" height="1" fill="#b4b1ab"/><rect x="24" y="225" width="1" height="1" fill="#b4b1ab"/><rect x="27" y="223" width="1" height="1" fill="#b4b1ab"/><rect x="27" y="225" width="1" height="1" fill="#b4b1ab"/><rect x="30" y="223" width="1" height="1" fill="#b4b1ab"/><rect x="30" y="225" width="1" height="1" fill="#b4b1ab"/><rect x="33" y="223" width="1" height="1" fill="#b4b1ab"/><rect x="33" y="225" width="1" height="1" fill="#b4b1ab"/><g transform="translate(8,231)"><path d="M3 4l7 17 8-16 5 0" fill="none" stroke="#333" stroke-width="1.4"/><path d="M1.5 4l1.5-1.5 1.5 1.5-1.5 1.5zM16.5 5l1.5-1.5 1.5 1.5-1.5 1.5zM21.5 5l1.5-1.5 1.5 1.5-1.5 1.5z" fill="#fff" stroke="#333" stroke-width="0.8"/><circle cx="10" cy="21" r="1.8" fill="#fff" stroke="#333" stroke-width="0.8"/><rect x="14" y="15" width="9" height="9" rx="1.5" fill="#5aa05a"/><path d="M18.5 16.8v5.4M15.8 19.5h5.4" stroke="#fff" stroke-width="1.8"/></g><g transform="translate(8,262)"><rect x="1" y="2" width="18" height="18" fill="#3a6a9a"/><rect x="1" y="2" width="6" height="6" fill="#1f3f63"/><rect x="13" y="2" width="6" height="6" fill="#1f3f63"/><rect x="7" y="8" width="6" height="6" fill="#1f3f63"/><rect x="1" y="14" width="6" height="6" fill="#1f3f63"/><rect x="13" y="14" width="6" height="6" fill="#8fb3d8"/><rect x="7" y="2" width="6" height="6" fill="#8fb3d8"/><rect x="14" y="15" width="9" height="9" rx="1.5" fill="#5aa05a"/><path d="M18.5 16.8v5.4M15.8 19.5h5.4" stroke="#fff" stroke-width="1.8"/></g><g transform="translate(8,296)"><rect x="1" y="2" width="19" height="19" fill="#b7cde6" stroke="#2d4a6a" stroke-width="1.4"/><path d="M1 12h19M10 2v19M1 2l9 10M10 2l0 0M20 2l-10 10" stroke="#2d4a6a" stroke-width="1"/><rect x="14" y="15" width="9" height="9" rx="1.5" fill="#5aa05a"/><path d="M18.5 16.8v5.4M15.8 19.5h5.4" stroke="#fff" stroke-width="1.8"/></g><g transform="translate(6,328)"><path d="M8 3c4-1 7 2 6 6s-5 8-9 9c3-2 5-4 5-6-3 0-5-2-5-5s1-3 3-4z" fill="#2d5a8a"/><rect x="14" y="15" width="9" height="9" rx="1.5" fill="#5aa05a"/><path d="M18.5 16.8v5.4M15.8 19.5h5.4" stroke="#fff" stroke-width="1.8"/></g><g transform="translate(7,360)"><path d="M2 22c3-8 8-16 20-20-2 7-6 13-14 16z" fill="#a9c6e6" stroke="#2d4a6a" stroke-width="1"/><path d="M2 22l14-14" stroke="#2d4a6a" stroke-width="0.8"/><rect x="14" y="15" width="9" height="9" rx="1.5" fill="#5aa05a"/><path d="M18.5 16.8v5.4M15.8 19.5h5.4" stroke="#fff" stroke-width="1.8"/></g><g transform="translate(8,392)"><rect x="2" y="2" width="19" height="18" rx="2" fill="#b7cde6" stroke="#5a7a9a"/><path d="M5 5l6 12 6-12" fill="none" stroke="#2d4a6a" stroke-width="1.3"/><rect x="14" y="15" width="9" height="9" rx="1.5" fill="#5aa05a"/><path d="M18.5 16.8v5.4M15.8 19.5h5.4" stroke="#fff" stroke-width="1.8"/></g><g transform="translate(7,424)"><path d="M3 4c2-3 8-3 11-1 3-1 7 0 7 4s-2 5-3 6v5h-3v-4h-3v4h-3v-5c-3 0-5-3-6-9z" fill="#3a6a9a" stroke="#1f3f63" stroke-width="0.8"/><rect x="13" y="15" width="9" height="9" rx="1.5" fill="#5aa05a"/><path d="M17.5 16.8v5.4M14.8 19.5h5.4" stroke="#fff" stroke-width="1.8"/></g><path d="M36 436h10l-5 5z" fill="#3c3c3c"/><g transform="translate(7,456)"><circle cx="11" cy="11" r="10" fill="#7fa6d6" stroke="#2d5a8a" stroke-width="1"/><path d="M1 11h20M11 1v20M4 5c4 2 10 2 14 0M4 17c4-2 10-2 14 0" stroke="#d0e0f5" stroke-width="0.9" fill="none"/></g><g transform="translate(7,456)"><rect x="13" y="15" width="9" height="9" rx="1.5" fill="#5aa05a"/><path d="M17.5 16.8v5.4M14.8 19.5h5.4" stroke="#fff" stroke-width="1.8"/></g><path d="M36 468h10l-5 5z" fill="#3c3c3c"/><g transform="translate(7,488)"><circle cx="11" cy="11" r="10" fill="#2d5a8a"/><path d="M1 8h20M1 14h20M11 1v20" stroke="#d0e0f5" stroke-width="1.5"/><rect x="13" y="15" width="9" height="9" rx="1.5" fill="#5aa05a"/><path d="M17.5 16.8v5.4M14.8 19.5h5.4" stroke="#fff" stroke-width="1.8"/></g><g transform="translate(7,520)"><circle cx="11" cy="11" r="10" fill="#dfe9f5" stroke="#2d5a8a" stroke-width="1"/><path d="M1 11h20M11 1v20M4 5c4 2 10 2 14 0M4 17c4-2 10-2 14 0" stroke="#6a9ad0" stroke-width="0.9" fill="none"/></g><g transform="translate(7,520)"><path d="M6 6l5 10 5-10" stroke="#2d4a6a" fill="none" stroke-width="1.3"/><rect x="13" y="15" width="9" height="9" rx="1.5" fill="#5aa05a"/><path d="M17.5 16.8v5.4M14.8 19.5h5.4" stroke="#fff" stroke-width="1.8"/></g><path d="M36 532h10l-5 5z" fill="#3c3c3c"/><g transform="translate(7,552)"><path d="M3 4l7 17 8-16 5 0" fill="none" stroke="#333" stroke-width="1.4"/><path d="M1.5 4l1.5-1.5 1.5 1.5-1.5 1.5zM16.5 5l1.5-1.5 1.5 1.5-1.5 1.5z" fill="#fff" stroke="#333" stroke-width="0.8"/><rect x="14" y="15" width="9" height="9" rx="1" fill="#e0b820"/><circle cx="18.5" cy="19.5" r="2" fill="none" stroke="#fff" stroke-width="1.3" stroke-dasharray="1 0.6"/></g><path d="M36 564h10l-5 5z" fill="#3c3c3c"/><g transform="translate(14,584)"><rect x="6" y="3" width="16" height="10" rx="2" fill="#a9c6e6" stroke="#2d5a8a"/><rect x="10" y="1" width="4" height="14" fill="#6a9ad0"/><path d="M3 13a8 8 0 0 0 8 8M1 13a11 11 0 0 0 10 10" stroke="#666" fill="none"/><rect x="14" y="15" width="9" height="9" rx="1" fill="#e0b820"/><circle cx="18.5" cy="19.5" r="2" fill="none" stroke="#fff" stroke-width="1.3" stroke-dasharray="1 0.6"/></g><rect x="272.5" y="172.5" width="11" height="11" rx="2.5" fill="none" stroke="#666"/><rect x="277.5" y="175.5" width="4" height="4" fill="none" stroke="#555" stroke-width="0.9"/><rect x="275.5" y="177.5" width="4" height="4" fill="#eeebe7" stroke="#555" stroke-width="0.9"/><rect x="286.5" y="172.5" width="11" height="11" rx="2.5" fill="none" stroke="#555"/><path d="M289 175l6 6M295 175l-6 6" stroke="#444" stroke-width="2"/><rect x="272.5" y="359.5" width="11" height="11" rx="2.5" fill="none" stroke="#666"/><rect x="277.5" y="362.5" width="4" height="4" fill="none" stroke="#555" stroke-width="0.9"/><rect x="275.5" y="364.5" width="4" height="4" fill="#eeebe7" stroke="#555" stroke-width="0.9"/><rect x="286.5" y="359.5" width="11" height="11" rx="2.5" fill="none" stroke="#555"/><path d="M289 362l6 6M295 362l-6 6" stroke="#444" stroke-width="2"/><g transform="translate(68,203) scale(0.72) translate(-12,-12)"><path d="M3 14l8-3 4 6-8 3z" fill="#e84040"/><path d="M3 11l8-3 2 3-8 3z" fill="#e6d040"/><path d="M4 8l7-3 2 3-7 3z" fill="#4a7fd0"/><path d="M8 12l6 6 3-2-5-6z" fill="#d8b070"/><path d="M13 10l8-8" stroke="#c89a40" stroke-width="2.5"/></g><g transform="translate(93,203) scale(0.72) translate(-12,-12)"><rect x="3" y="8" width="12" height="12" fill="none" stroke="#777"/><rect x="6" y="5" width="12" height="12" fill="#f2f0ec" stroke="#777"/><path d="M11 12V3h3v9" stroke="#5a8fd0" stroke-width="1.3" fill="none"/><rect x="14" y="15" width="9" height="9" rx="1.5" fill="#5aa05a"/><path d="M18.5 16.8v5.4M15.8 19.5h5.4" stroke="#fff" stroke-width="1.8"/></g><g transform="translate(118,203) scale(0.72) translate(-12,-12)"><path d="M2 11c5-6 14-6 19 0-5 6-14 6-19 0z" fill="#fff" stroke="#888"/><circle cx="11" cy="11" r="4" fill="#5a8fd0"/><circle cx="11" cy="11" r="1.5" fill="#111"/></g><path d="M121 208h10l-5 5z" fill="#3c3c3c"/><g transform="translate(142,203) scale(0.72) translate(-12,-12)"><path d="M3 4h18l-7 8v9l-4-2v-7z" fill="#6a9ad0" stroke="#3f6ea8"/><rect x="3" y="3" width="18" height="2.5" fill="#f0d040"/></g><g transform="translate(166,203) scale(0.72) translate(-12,-12)"><text x="1" y="15" font-size="17" font-family="Liberation Serif" fill="#7a2a8a">ε</text><rect x="11" y="14" width="8" height="8" fill="#bbb" stroke="#888"/></g><path d="M180 202h10l-5 5z" fill="#3c3c3c"/><g transform="translate(206,203) scale(0.72) translate(-12,-12)"><path d="M2 4h4M2 4v16M2 12h3M2 20h3" stroke="#888" fill="none"/><rect x="5" y="9" width="4" height="4" fill="#f0a020"/><rect x="5" y="16" width="4" height="4" fill="#f0a020"/><path d="M14 2v12h-4l6 7 6-7h-4v-12z" fill="#5a8fd0" stroke="#3f6ea8" stroke-width="0.7"/></g><g transform="translate(231,203) scale(0.72) translate(-12,-12)"><path d="M2 4h4M2 4v16M2 12h3M2 20h3" stroke="#888" fill="none"/><rect x="5" y="9" width="4" height="4" fill="#f0a020"/><rect x="5" y="16" width="4" height="4" fill="#f0a020"/><path d="M14 21v-12h-4l6-7 6 7h-4v12z" fill="#5a8fd0" stroke="#3f6ea8" stroke-width="0.7"/></g><g transform="translate(255,203) scale(0.72) translate(-12,-12)"><rect x="3" y="4" width="14" height="14" fill="#f2f0ec" stroke="#777" stroke-width="1.3"/><rect x="13" y="15" width="9" height="6" rx="2" fill="#e33"/><rect x="15" y="17.3" width="5" height="1.5" fill="#fff"/></g><rect x="53" y="315" width="231" height="19" fill="#3a8ad0"/><rect x="115" y="316" width="1" height="17" fill="#2a6aa8"/><rect x="76.5" y="222.5" width="13" height="13" fill="#fff" stroke="#a9a59f"/><path d="M79.5 229l2.5 3.5 5-7" fill="none" stroke="#111" stroke-width="1.6"/><rect x="76.5" y="241.5" width="13" height="13" fill="#fff" stroke="#a9a59f"/><path d="M79.5 248l2.5 3.5 5-7" fill="none" stroke="#111" stroke-width="1.6"/><rect x="76.5" y="260.5" width="13" height="13" fill="#fff" stroke="#a9a59f"/><path d="M79.5 267l2.5 3.5 5-7" fill="none" stroke="#111" stroke-width="1.6"/><rect x="76.5" y="279.5" width="13" height="13" fill="#fff" stroke="#a9a59f"/><path d="M79.5 286l2.5 3.5 5-7" fill="none" stroke="#111" stroke-width="1.6"/><rect x="76.5" y="298.5" width="13" height="13" fill="#fff" stroke="#a9a59f"/><path d="M79.5 305l2.5 3.5 5-7" fill="none" stroke="#111" stroke-width="1.6"/><rect x="76.5" y="317.5" width="13" height="13" fill="#fff" stroke="#a9a59f"/><path d="M79.5 324l2.5 3.5 5-7" fill="none" stroke="#111" stroke-width="1.6"/><circle cx="103.5" cy="229" r="3" fill="#b83a3a" stroke="#6a2020" stroke-width="0.7"/><rect x="96.5" y="240.5" width="15" height="15" fill="#a0a0a0" stroke="#555"/><rect x="96" y="266" width="16" height="2.5" fill="#e03030"/><rect x="96.5" y="278.5" width="15" height="15" fill="#7b9df5" stroke="#2b3b6b"/><rect x="96" y="304" width="16" height="2.5" fill="#20e0f0"/><rect x="96" y="316" width="16" height="16" fill="#a9d8b0"/><path d="M99 331l2-5 8-9 2 2-8 9z" fill="#d8d040" stroke="#888" stroke-width="0.6"/><rect x="284" y="220" width="15" height="114" fill="#f2f0ec" stroke="#c9c6bf"/><rect x="285" y="238" width="13" height="20" fill="#fff"/><rect x="285" y="258" width="13" height="58" fill="#dcd9d4"/><path d="M287.5 229l4-4.5 4 4.5z" fill="#444"/><path d="M287.5 323.5l4 4.5 4-4.5z" fill="#444"/><rect x="279" y="221" width="4" height="112" fill="#ecebe9"/><rect x="53" y="334" width="246" height="16" fill="#f2f0ec" stroke="#c9c6bf"/><rect x="218" y="335" width="52" height="14" fill="#dcd9d4"/><path d="M63 337.5l-4.5 4 4.5 4z" fill="#444"/><path d="M276 337.5l4.5 4-4.5 4z" fill="#444"/><rect x="170" y="352" width="1" height="1" fill="#b4b1ab"/><rect x="173" y="352" width="1" height="1" fill="#b4b1ab"/><rect x="176" y="352" width="1" height="1" fill="#b4b1ab"/><rect x="179" y="352" width="1" height="1" fill="#b4b1ab"/><rect x="182" y="352" width="1" height="1" fill="#b4b1ab"/><rect x="185" y="352" width="1" height="1" fill="#b4b1ab"/><g transform="translate(67,389) scale(0.72) translate(-12,-12)"><rect x="4" y="4" width="13" height="13" fill="none" stroke="#777" stroke-width="1.3"/><circle cx="18" cy="18" r="3.5" fill="#5aa05a" stroke="#fff"/></g><g transform="translate(93,389) scale(0.72) translate(-12,-12)"><path d="M4 11a8 8 0 0 1 14-5l2-2v7h-7l2.5-2.5a5 5 0 0 0-8 2.5z" fill="#6b9bd2" stroke="#3f6ea8" stroke-width="0.6"/><path d="M20 13a8 8 0 0 1-14 5l-2 2v-7h7l-2.5 2.5a5 5 0 0 0 8-2.5z" fill="#6b9bd2" stroke="#3f6ea8" stroke-width="0.6"/></g><g transform="translate(118,389) scale(0.72) translate(-12,-12)"><path d="M3 4h18l-7 8v9l-4-2v-7z" fill="#6a9ad0" stroke="#3f6ea8"/><rect x="3" y="3" width="18" height="2.5" fill="#f0d040"/></g><g transform="translate(143,389) scale(0.72) translate(-12,-12)"><path d="M2 4h4M2 4v16M2 12h3M2 20h3" stroke="#888" fill="none"/><rect x="5" y="9" width="4" height="4" fill="#f0a020"/><rect x="5" y="16" width="4" height="4" fill="#f0a020"/><path d="M14 21v-12h-4l6-7 6 7h-4v12z" fill="#5a8fd0" stroke="#3f6ea8" stroke-width="0.7"/></g><g transform="translate(168,389) scale(0.72) translate(-12,-12)"><circle cx="12" cy="12" r="7.5" fill="#5a8fd0" stroke="#3f6ea8"/><text x="10" y="16.5" font-size="10" font-weight="bold" font-style="italic" font-family="Liberation Serif" fill="#fff">i</text></g><path d="M60 412.0l5.5 4.5-5.5 4.5z" fill="#3c3c3c"/><g transform="translate(76,408.5)"><path d="M8 0.5l2.2 5 5.3 0.4-4 3.5 1.3 5.3-4.8-2.8-4.8 2.8 1.3-5.3-4-3.5 5.3-0.4z" fill="#f6e03a" stroke="#c9a92a" stroke-width="0.8"/></g><path d="M60 431.0l5.5 4.5-5.5 4.5z" fill="#3c3c3c"/><g transform="translate(76,427.5)"><path d="M1 1h13v14h-12l-1-1z" fill="#f2f0ec" stroke="#9a9a9a"/><path d="M8 1h3v6l-1.5-1.5-1.5 1.5z" fill="#6b9bd2"/></g><path d="M60 450.0l5.5 4.5-5.5 4.5z" fill="#3c3c3c"/><g transform="translate(76,446.5)"><rect x="0.5" y="1.5" width="15" height="13" fill="#8fcf50" stroke="#6a8a4a"/><path d="M1 14l14-12" stroke="#d8f0b0" stroke-width="1.5"/><path d="M8 5l5 0 0 4z" fill="#1a8a2a"/></g><path d="M60 469.0l5.5 4.5-5.5 4.5z" fill="#3c3c3c"/><g transform="translate(76,465.5)"><path d="M1 1h5l2 2h7v12h-14z" fill="#f5f5f5" stroke="#777"/><path d="M5 12v-3l3-3 3 3v3z" fill="none" stroke="#222" stroke-width="0.9"/></g><path d="M60 488.0l5.5 4.5-5.5 4.5z" fill="#3c3c3c"/><g transform="translate(76,484.5)"><path d="M1 1h5l2 2h7v12h-14z" fill="#efefef" stroke="#888"/></g><path d="M60 507.0l5.5 4.5-5.5 4.5z" fill="#3c3c3c"/><g transform="translate(76,503.5)"><path d="M1 6l7-4 7 4v7l-7 3-7-3z" fill="#e8c020" stroke="#8a6a10" stroke-width="0.8"/><circle cx="8" cy="5" r="4" fill="#5a8fd0" stroke="#2a5a9a" stroke-width="0.6"/></g><path d="M60 526.0l5.5 4.5-5.5 4.5z" fill="#3c3c3c"/><g transform="translate(76,522.5)"><path d="M1 15c2-6 6-12 14-14-1 6-5 11-11 12z" fill="#a9c6e6" stroke="#2d4a6a" stroke-width="0.8"/></g><path d="M60 545.0l5.5 4.5-5.5 4.5z" fill="#3c3c3c"/><g transform="translate(76,541.5)"><path d="M1 3c2-3 6-3 8-1 3-1 6 0 6 3s-2 4-3 5v4h-2v-3h-2v3h-2v-4c-2 0-4-2-5-7z" fill="#3a6a9a" stroke="#1f3f63" stroke-width="0.6"/></g><g transform="translate(76,560.5)"><path d="M1 2c5 1 10 3 14 6-4 3-9 5-14 6 2-4 2-8 0-12z" fill="#3a6a9a"/><path d="M4 4c1 3 1 6 0 8" stroke="#cfe0f5" fill="none"/></g><g transform="translate(76,579.5)"><rect x="0.5" y="1" width="15" height="14" rx="3" fill="#6a9ad0"/><text x="1.5" y="11" font-size="6.5" font-family="Liberation Sans" fill="#fff">DB2</text></g><path d="M60 602.0l5.5 4.5-5.5 4.5z" fill="#3c3c3c"/><g transform="translate(76,598.5)"><circle cx="8" cy="8" r="7.5" fill="#7fa6d6" stroke="#2d5a8a" stroke-width="0.8"/><path d="M3 5c2-2 4 0 5 2s-2 3-1 6M10 2c0 3 3 3 4 6" stroke="#1f3f63" stroke-width="1.6" fill="none"/></g><path d="M60 621.0l5.5 4.5-5.5 4.5z" fill="#3c3c3c"/><g transform="translate(76,617.5)"><circle cx="8" cy="8" r="7.5" fill="#7fa6d6" stroke="#2d5a8a" stroke-width="0.8"/><path d="M3 5c2-2 4 0 5 2s-2 3-1 6M10 2c0 3 3 3 4 6" stroke="#1f3f63" stroke-width="1.6" fill="none"/></g><path d="M60 640.0l5.5 4.5-5.5 4.5z" fill="#3c3c3c"/><g transform="translate(76,636.5)"><circle cx="8" cy="8" r="7.5" fill="#2d5a8a"/><path d="M0.5 5.5h15M0.5 10.5h15M8 0.5v15" stroke="#d0e0f5" stroke-width="1.2"/></g><path d="M60 659.0l5.5 4.5-5.5 4.5z" fill="#3c3c3c"/><g transform="translate(76,655.5)"><circle cx="8" cy="8" r="7.5" fill="#eef3fa" stroke="#5a8ad0" stroke-width="0.8"/><path d="M4 4l4 8 4-8" stroke="#2d4a6a" fill="none" stroke-width="1.1"/></g><path d="M60 678.0l5.5 4.5-5.5 4.5z" fill="#3c3c3c"/><g transform="translate(76,674.5)"><circle cx="8" cy="8" r="7.5" fill="#eef3fa" stroke="#5a8ad0" stroke-width="0.8"/><path d="M0.5 8h15M8 0.5v15M3 3.5c3 2 7 2 10 0M3 12.5c3-2 7-2 10 0" stroke="#7aa0d8" fill="none" stroke-width="0.8"/></g><g transform="translate(76,693.5)"><circle cx="8" cy="8" r="7.5" fill="#7fa6d6" stroke="#2d5a8a" stroke-width="0.8"/><path d="M3 5c2-2 4 0 5 2s-2 3-1 6M10 2c0 3 3 3 4 6" stroke="#1f3f63" stroke-width="1.6" fill="none"/></g><g transform="translate(76,712.5)"><circle cx="8" cy="8" r="7.5" fill="#dfe9f5" stroke="#2d5a8a" stroke-width="0.8"/><path d="M3 5c2-2 4 0 5 2s-2 3-1 6M10 2c0 3 3 3 4 6" stroke="#1f3f63" stroke-width="1.6" fill="none"/></g><g transform="translate(76,731.5)"><path d="M8 1v14M2 4l12 8M14 4l-12 8" stroke="#4a7fbf" stroke-width="2.5"/><circle cx="8" cy="8" r="2.5" fill="#fff"/></g><rect x="4.5" y="826.5" width="267" height="23" rx="3" fill="#fff" stroke="#b9b5ae"/><circle cx="18" cy="836" r="4.3" fill="none" stroke="#666" stroke-width="1.4"/><path d="M21 839l4 4" stroke="#666" stroke-width="1.6"/><rect x="391.5" y="826.5" width="126" height="22" rx="3" fill="#fff" stroke="#b9b5ae"/><g transform="translate(517,826)"><path d="M6 5c3-3 9-2 11 2l2 8c0 4-4 6-7 5s-5-3-6-6z" fill="#555"/><path d="M9 8c2-1 4 0 5 2" stroke="#fff" stroke-width="1.2" fill="none"/><circle cx="11" cy="13" r="2" fill="#fff"/><path d="M17 4l3-2" stroke="#555"/></g><rect x="580.5" y="826.5" width="96" height="22" rx="3" fill="#fff" stroke="#b9b5ae"/><rect x="656" y="827" width="1" height="21" fill="#c9c6bf"/><path d="M662 836h9l-4.5 4.5z" fill="#444"/><rect x="689" y="835" width="11" height="10" rx="1.5" fill="#555"/><path d="M691 835v-3a3.5 3.5 0 0 1 7 0v3" stroke="#555" stroke-width="1.8" fill="none"/><rect x="764.5" y="826.5" width="97" height="22" rx="3" fill="#fff" stroke="#b9b5ae"/><rect x="847" y="827" width="1" height="21" fill="#c9c6bf"/><path d="M850 835l4.5-4.5 4.5 4.5z" fill="#444"/><path d="M850 841l4.5 4.5 4.5-4.5z" fill="#444"/><rect x="926.5" y="826.5" width="92" height="22" rx="3" fill="#fff" stroke="#b9b5ae"/><rect x="1005" y="827" width="1" height="21" fill="#c9c6bf"/><path d="M1008 835l4.5-4.5 4.5 4.5z" fill="#444"/><path d="M1008 841l4.5 4.5 4.5-4.5z" fill="#444"/><rect x="1026.5" y="831.5" width="13" height="13" fill="#fff" stroke="#a9a59f"/><path d="M1029.5 838l2.5 3.5 5-7" fill="none" stroke="#111" stroke-width="1.6"/><circle cx="1109" cy="838" r="6.5" fill="#eee" stroke="#777"/><path d="M1102.5 838h13M1109 831.5v13M1104 834c3 1.5 7 1.5 10 0M1104 842c3-1.5 7-1.5 10 0" stroke="#777" stroke-width="0.8" fill="none"/><ellipse cx="1208" cy="837" rx="8.5" ry="7" fill="#555"/><path d="M1206 843l6 4-1-5z" fill="#555"/><circle cx="1204" cy="837" r="1.3" fill="#fff"/><circle cx="1208" cy="837" r="1.3" fill="#fff"/><circle cx="1212" cy="837" r="1.3" fill="#fff"/><rect x="1242" y="842" width="1" height="1" fill="#bbb"/><rect x="1242" y="845" width="1" height="1" fill="#bbb"/><rect x="1239" y="845" width="1" height="1" fill="#bbb"/><rect x="1242" y="848" width="1" height="1" fill="#bbb"/><rect x="1239" y="848" width="1" height="1" fill="#bbb"/><rect x="1236" y="848" width="1" height="1" fill="#bbb"/></svg>
<svg class="a" style="left:0;top:0" width="1246" height="853" font-family="Liberation Sans"><text x="564.4" y="19.5" font-size="13.5" font-weight="bold" fill="#dfdbd2" textLength="115.6" lengthAdjust="spacingAndGlyphs">*example - QGIS</text><text x="10.3" y="45.6" font-size="13.5" fill="#2b2b2b" stroke="#2b2b2b" stroke-width="0.25" textLength="48.1" lengthAdjust="spacingAndGlyphs">Project</text><rect x="34.4" y="47.1" width="3.4" height="1" fill="#2b2b2b"/><text x="72.9" y="45.6" font-size="13.5" fill="#2b2b2b" stroke="#2b2b2b" stroke-width="0.25" textLength="26.6" lengthAdjust="spacingAndGlyphs">Edit</text><rect x="72.9" y="47.1" width="10.3" height="1" fill="#2b2b2b"/><text x="114" y="45.6" font-size="13.5" fill="#2b2b2b" stroke="#2b2b2b" stroke-width="0.25" textLength="33.0" lengthAdjust="spacingAndGlyphs">View</text><rect x="114.0" y="47.1" width="10.2" height="1" fill="#2b2b2b"/><text x="162.1" y="45.6" font-size="13.5" fill="#2b2b2b" stroke="#2b2b2b" stroke-width="0.25" textLength="36.3" lengthAdjust="spacingAndGlyphs">Layer</text><rect x="162.1" y="47.1" width="8.1" height="1" fill="#2b2b2b"/><text x="212.8" y="45.6" font-size="13.5" fill="#2b2b2b" stroke="#2b2b2b" stroke-width="0.25" textLength="56.2" lengthAdjust="spacingAndGlyphs">Settings</text><rect x="212.8" y="47.1" width="10.4" height="1" fill="#2b2b2b"/><text x="284.1" y="45.6" font-size="13.5" fill="#2b2b2b" stroke="#2b2b2b" stroke-width="0.25" textLength="49.1" lengthAdjust="spacingAndGlyphs">Plugins</text><rect x="284.1" y="47.1" width="10.0" height="1" fill="#2b2b2b"/><text x="347.7" y="45.6" font-size="13.5" fill="#2b2b2b" stroke="#2b2b2b" stroke-width="0.25" textLength="44.6" lengthAdjust="spacingAndGlyphs">Vector</text><rect x="378.3" y="47.1" width="8.7" height="1" fill="#2b2b2b"/><text x="407.1" y="45.6" font-size="13.5" fill="#2b2b2b" stroke="#2b2b2b" stroke-width="0.25" textLength="43.6" lengthAdjust="spacingAndGlyphs">Raster</text><rect x="407.1" y="47.1" width="10.7" height="1" fill="#2b2b2b"/><text x="465.2" y="45.6" font-size="13.5" fill="#2b2b2b" stroke="#2b2b2b" stroke-width="0.25" textLength="63.2" lengthAdjust="spacingAndGlyphs">Database</text><rect x="465.2" y="47.1" width="10.7" height="1" fill="#2b2b2b"/><text x="542.2" y="45.6" font-size="13.5" fill="#2b2b2b" stroke="#2b2b2b" stroke-width="0.25" textLength="31.2" lengthAdjust="spacingAndGlyphs">Web</text><rect x="542.2" y="47.1" width="14.5" height="1" fill="#2b2b2b"/><text x="588.4" y="45.6" font-size="13.5" fill="#2b2b2b" stroke="#2b2b2b" stroke-width="0.25" textLength="35.7" lengthAdjust="spacingAndGlyphs">Mesh</text><rect x="588.4" y="47.1" width="12.2" height="1" fill="#2b2b2b"/><text x="639.2" y="45.6" font-size="13.5" fill="#2b2b2b" stroke="#2b2b2b" stroke-width="0.25" textLength="72.8" lengthAdjust="spacingAndGlyphs">Processing</text><rect x="662.1" y="47.1" width="7.4" height="1" fill="#2b2b2b"/><text x="726.8" y="45.6" font-size="13.5" fill="#2b2b2b" stroke="#2b2b2b" stroke-width="0.25" textLength="31.1" lengthAdjust="spacingAndGlyphs">Help</text><rect x="726.8" y="47.1" width="10.9" height="1" fill="#2b2b2b"/><text x="56.5" y="184" font-size="14" fill="#1e1e1e" stroke="#1e1e1e" stroke-width="0.25" textLength="46.2" lengthAdjust="spacingAndGlyphs">Layers</text><text x="56.5" y="370.7" font-size="14" fill="#1e1e1e" stroke="#1e1e1e" stroke-width="0.25" textLength="55.4" lengthAdjust="spacingAndGlyphs">Browser</text><text x="118.5" y="234.1" font-size="13.5" font-weight="bold" fill="#111" textLength="44.5" lengthAdjust="spacingAndGlyphs">places</text><text x="118.5" y="253.1" font-size="13.5" font-weight="bold" fill="#111" textLength="63.6" lengthAdjust="spacingAndGlyphs">buildings</text><text x="118.5" y="272.1" font-size="13.5" font-weight="bold" fill="#111" textLength="39.0" lengthAdjust="spacingAndGlyphs">roads</text><text x="118.5" y="291.1" font-size="13.5" font-weight="bold" fill="#111" textLength="37.4" lengthAdjust="spacingAndGlyphs">water</text><text x="118.5" y="310.1" font-size="13.5" font-weight="bold" fill="#111" textLength="39.0" lengthAdjust="spacingAndGlyphs">rivers</text><text x="118.5" y="329.1" font-size="13.5" font-weight="bold" fill="#fff" textLength="54.1" lengthAdjust="spacingAndGlyphs">landuse</text><rect x="118.5" y="331" width="56" height="1" fill="#fff"/><text x="98.5" y="421.8" font-size="13.5" fill="#1f1f1f" stroke="#1f1f1f" stroke-width="0.25" textLength="60.5" lengthAdjust="spacingAndGlyphs">Favorites</text><text x="98.5" y="440.8" font-size="13.5" fill="#1f1f1f" stroke="#1f1f1f" stroke-width="0.25" textLength="125.4" lengthAdjust="spacingAndGlyphs">Spatial Bookmarks</text><text x="98.5" y="459.8" font-size="13.5" fill="#1f1f1f" stroke="#1f1f1f" stroke-width="0.25" textLength="91.5" lengthAdjust="spacingAndGlyphs">Project Home</text><text x="98.5" y="478.8" font-size="13.5" fill="#1f1f1f" stroke="#1f1f1f" stroke-width="0.25" textLength="39.6" lengthAdjust="spacingAndGlyphs">Home</text><text x="98.5" y="497.8" font-size="13.5" fill="#1f1f1f" stroke="#1f1f1f" stroke-width="0.25" textLength="4.1" lengthAdjust="spacingAndGlyphs">/</text><text x="98.5" y="516.8" font-size="13.5" fill="#1f1f1f" stroke="#1f1f1f" stroke-width="0.25" textLength="82.7" lengthAdjust="spacingAndGlyphs">GeoPackage</text><text x="98.5" y="535.8" font-size="13.5" fill="#1f1f1f" stroke="#1f1f1f" stroke-width="0.25" textLength="66.8" lengthAdjust="spacingAndGlyphs">SpatiaLite</text><text x="98.5" y="554.8" font-size="13.5" fill="#1f1f1f" stroke="#1f1f1f" stroke-width="0.25" textLength="51.8" lengthAdjust="spacingAndGlyphs">PostGIS</text><text x="98.5" y="573.8" font-size="13.5" fill="#1f1f1f" stroke="#1f1f1f" stroke-width="0.25" textLength="47.8" lengthAdjust="spacingAndGlyphs">MSSQL</text><text x="98.5" y="592.8" font-size="13.5" fill="#1f1f1f" stroke="#1f1f1f" stroke-width="0.25" textLength="27.8" lengthAdjust="spacingAndGlyphs">DB2</text><text x="98.5" y="611.8" font-size="13.5" fill="#1f1f1f" stroke="#1f1f1f" stroke-width="0.25" textLength="83.9" lengthAdjust="spacingAndGlyphs">WMS/WMTS</text><text x="98.5" y="630.8" font-size="13.5" fill="#1f1f1f" stroke="#1f1f1f" stroke-width="0.25" textLength="61.7" lengthAdjust="spacingAndGlyphs">XYZ Tiles</text><text x="98.5" y="649.8" font-size="13.5" fill="#1f1f1f" stroke="#1f1f1f" stroke-width="0.25" textLength="30.5" lengthAdjust="spacingAndGlyphs">WCS</text><text x="98.5" y="668.8" font-size="13.5" fill="#1f1f1f" stroke="#1f1f1f" stroke-width="0.25" textLength="170.3" lengthAdjust="spacingAndGlyphs">WFS / OGC API - Features</text><text x="98.5" y="687.8" font-size="13.5" fill="#1f1f1f" stroke="#1f1f1f" stroke-width="0.25" textLength="33.0" lengthAdjust="spacingAndGlyphs">OWS</text><text x="98.5" y="706.8" font-size="13.5" fill="#1f1f1f" stroke="#1f1f1f" stroke-width="0.25" textLength="116.3" lengthAdjust="spacingAndGlyphs">ArcGisMapServer</text><text x="98.5" y="725.8" font-size="13.5" fill="#1f1f1f" stroke="#1f1f1f" stroke-width="0.25" textLength="139.4" lengthAdjust="spacingAndGlyphs">ArcGisFeatureServer</text><text x="98.5" y="744.8" font-size="13.5" fill="#1f1f1f" stroke="#1f1f1f" stroke-width="0.25" textLength="63.2" lengthAdjust="spacingAndGlyphs">GeoNode</text><text x="33.4" y="842.2" font-size="13.5" fill="#8a8a8a" stroke="#8a8a8a" stroke-width="0.25" textLength="151.6" lengthAdjust="spacingAndGlyphs">Type to locate (Ctrl+K)</text><text x="328.4" y="842.2" font-size="12.5" fill="#2b2b2b" stroke="#2b2b2b" stroke-width="0.25" textLength="59.5" lengthAdjust="spacingAndGlyphs">Coordinate</text><text x="400.7" y="842.2" font-size="12.5" fill="#2b2b2b" stroke="#2b2b2b" stroke-width="0.25" textLength="105.9" lengthAdjust="spacingAndGlyphs">20.48982,-34.00907</text><text x="550.9" y="842.2" font-size="12.5" fill="#2b2b2b" stroke="#2b2b2b" stroke-width="0.25" textLength="26.3" lengthAdjust="spacingAndGlyphs">Scale</text><text x="584.3" y="842.2" font-size="12.5" fill="#2b2b2b" stroke="#2b2b2b" stroke-width="0.25" textLength="43.0" lengthAdjust="spacingAndGlyphs">1:14392</text><text x="709.6" y="842.2" font-size="12.5" fill="#2b2b2b" stroke="#2b2b2b" stroke-width="0.25" textLength="51.2" lengthAdjust="spacingAndGlyphs">Magnifier</text><text x="770.6" y="842.2" font-size="12.5" fill="#2b2b2b" stroke="#2b2b2b" stroke-width="0.25" textLength="28.3" lengthAdjust="spacingAndGlyphs">100%</text><text x="870.6" y="842.2" font-size="12.5" fill="#2b2b2b" stroke="#2b2b2b" stroke-width="0.25" textLength="46.7" lengthAdjust="spacingAndGlyphs">Rotation</text><text x="930.7" y="842.2" font-size="12.5" fill="#2b2b2b" stroke="#2b2b2b" stroke-width="0.25" textLength="23.8" lengthAdjust="spacingAndGlyphs">0,0 °</text><text x="1045.8" y="842.2" font-size="12.5" fill="#2b2b2b" stroke="#2b2b2b" stroke-width="0.25" textLength="37.8" lengthAdjust="spacingAndGlyphs">Render</text><text x="1122.2" y="842.2" font-size="12.5" fill="#2b2b2b" stroke="#2b2b2b" stroke-width="0.25" textLength="57.8" lengthAdjust="spacingAndGlyphs">EPSG:4326</text></svg>
</body></html>
